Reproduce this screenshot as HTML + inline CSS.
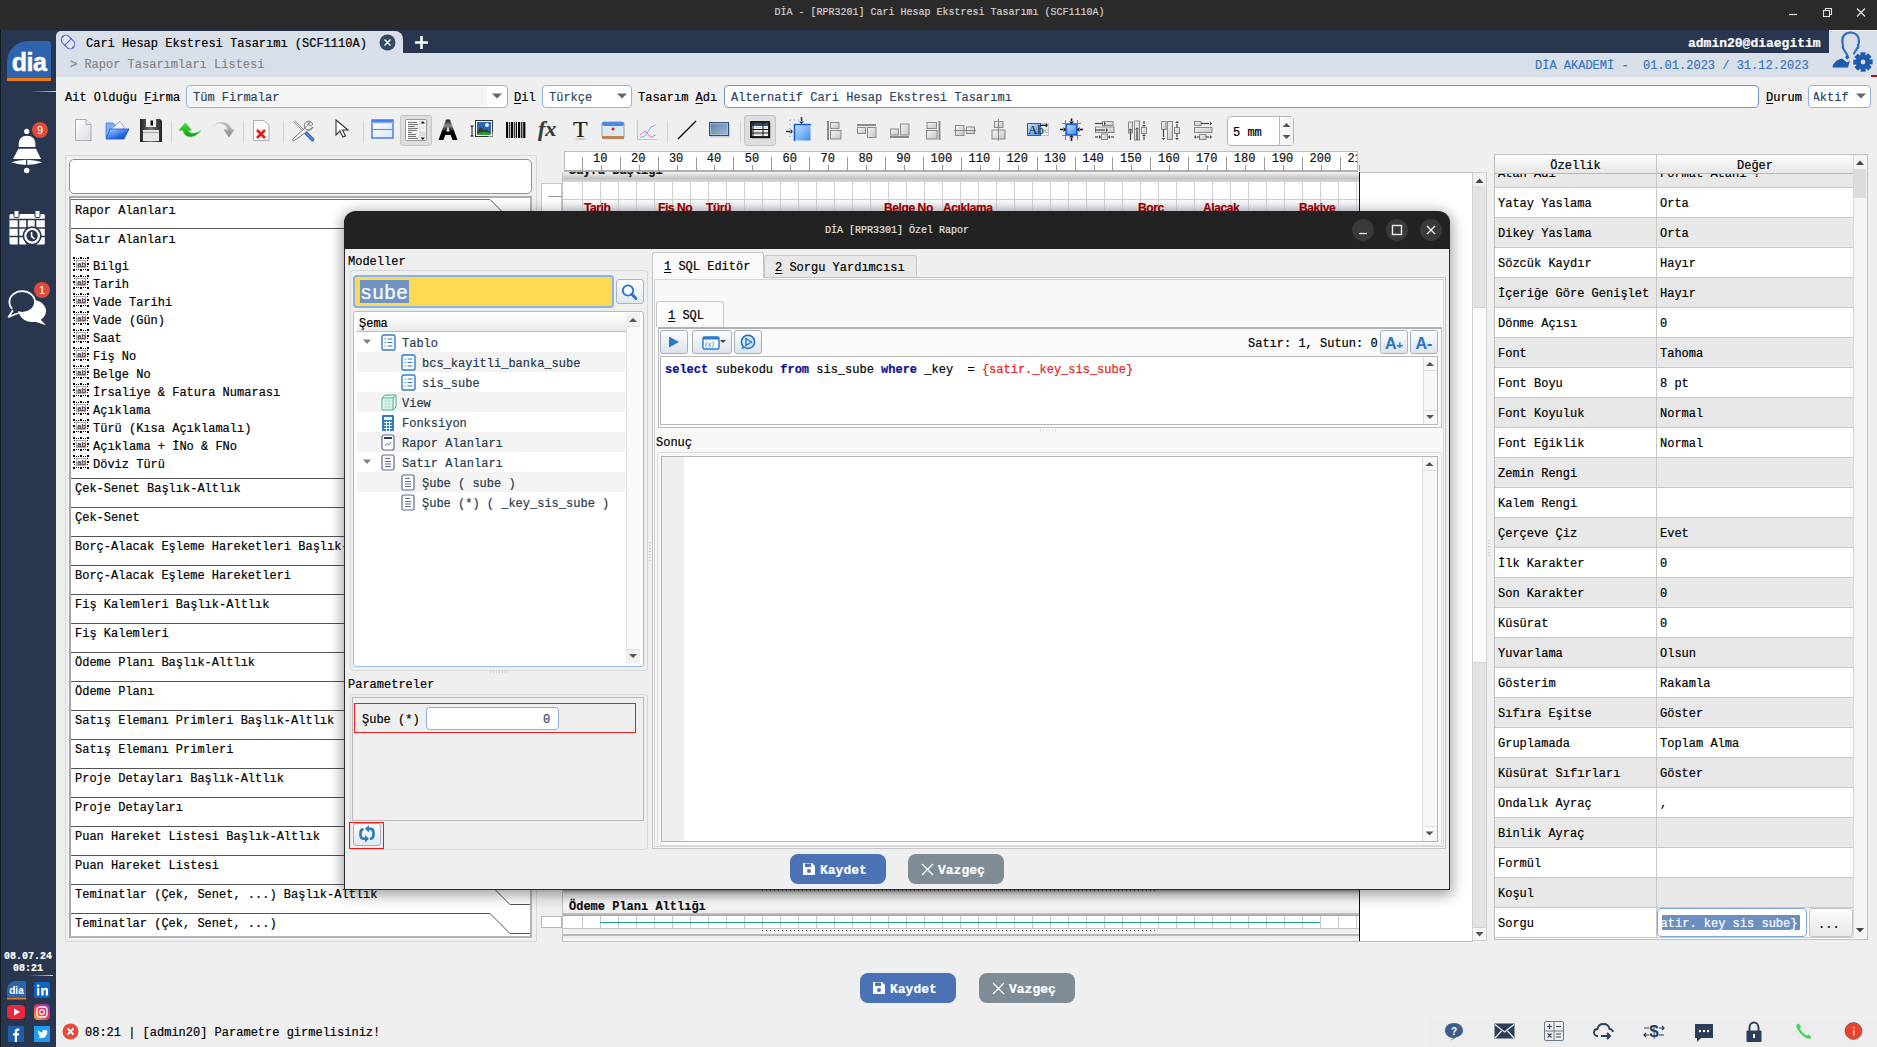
<!DOCTYPE html><html><head><meta charset="utf-8"><style>
*{margin:0;padding:0;box-sizing:border-box}
html,body{width:1877px;height:1047px;overflow:hidden;background:#efefef;font-family:"Liberation Mono",monospace;font-size:12px;color:#000}
.ab{position:absolute}
.t{position:absolute;white-space:pre;-webkit-text-stroke:0.2px currentColor}
svg{position:absolute;overflow:visible}
u{text-decoration:underline;text-underline-offset:2px}
</style></head><body>
<div class="ab" style="left:0px;top:0px;width:1877px;height:30px;background:#2b2b2b"></div>
<div class="t" style="left:1px;width:1877px;text-align:center;top:8.34px;font-size:10px;line-height:10px;color:#cfcfcf">DİA - [RPR3201] Cari Hesap Ekstresi Tasarımı (SCF1110A)</div>
<svg style="left:1786px;top:6px;" width="12" height="12" viewBox="0 0 12 12"><path d="M3 8.5H11" stroke="#ddd" stroke-width="1.2"/></svg>
<svg style="left:1820px;top:6px;" width="14" height="14" viewBox="0 0 14 14"><rect x="3.5" y="4.5" width="6" height="6" fill="none" stroke="#ddd" stroke-width="1.1"/><path d="M5.5 4.5V2.5H11.5V8.5H9.5" fill="none" stroke="#ddd" stroke-width="1.1"/></svg>
<svg style="left:1854px;top:6px;" width="14" height="14" viewBox="0 0 14 14"><path d="M3 2.5L11 10.5M11 2.5L3 10.5" stroke="#ddd" stroke-width="1.3"/></svg>
<div class="ab" style="left:0px;top:30px;width:56px;height:1017px;background:#283650"></div>
<div class="ab" style="left:0px;top:30px;width:1px;height:1017px;background:#121a24"></div>
<svg style="left:6px;top:40px;" width="46" height="42" viewBox="0 0 46 42"><path d="M1 22C1 10 11 1 22 1H42Q45 1 45 4V38H1Z" fill="#2e63ae"/><rect x="1" y="38" width="44" height="3" fill="#f07a12"/><text x="23" y="30.5" text-anchor="middle" font-family="Liberation Sans" font-weight="bold" font-size="25" letter-spacing="-0.5" fill="#fff" stroke="#fff" stroke-width=".5">dia</text></svg>
<div class="ab" style="left:30px;top:91px;width:26px;height:1px;background:linear-gradient(90deg,rgba(255,255,255,0),#cfd6e0)"></div>
<svg style="left:8px;top:120px;" width="42" height="56" viewBox="0 0 42 56"><circle cx="18.7" cy="11.4" r="2.6" fill="#fff"/><path d="M10.7 27.1V24C10.7 19 14 15.7 19 15.7C24 15.7 27.4 19 27.4 24V27.1Z" fill="#fff"/><path d="M10.4 28.8H28L33 39.1H5Z" fill="#fff"/><path d="M3 42.3Q18.7 37 34.4 42.3Q18.7 47.6 3 42.3Z" fill="#fff"/><path d="M18.7 40V45" stroke="#283650" stroke-width="1.2"/><circle cx="18.7" cy="50.5" r="2.7" fill="#fff"/></svg>
<svg style="left:31px;top:121px;" width="18" height="18" viewBox="0 0 18 18"><circle cx="9" cy="9" r="8" fill="#e04a3a"/><text x="9" y="13" text-anchor="middle" font-family="Liberation Sans" font-size="11" fill="#fff">9</text></svg>
<svg style="left:9px;top:208px;" width="38" height="40" viewBox="0 0 38 40"><rect x="0.5" y="6" width="35.3" height="30.5" rx="1.5" fill="#fff"/><rect x="5" y="2.5" width="5" height="7" rx="1" fill="#fff" stroke="#283650" stroke-width="1"/><rect x="26" y="2.5" width="5" height="7" rx="1" fill="#fff" stroke="#283650" stroke-width="1"/><path d="M0.5 11.5H36M0.5 20H36M0.5 28.5H36M9.5 11.5V37M18 11.5V37M26.5 11.5V37" stroke="#283650" stroke-width="1.6"/><circle cx="23.1" cy="27.8" r="9.6" fill="#283650"/><circle cx="23.1" cy="27.8" r="6.8" fill="none" stroke="#fff" stroke-width="2.2"/><path d="M22.6 24V28.3L25.5 31" stroke="#fff" stroke-width="1.6" fill="none"/></svg>
<svg style="left:6px;top:282px;" width="46" height="48" viewBox="0 0 46 48"><ellipse cx="26.4" cy="29" rx="13.6" ry="11" fill="#fff"/><path d="M33 36L40 43.3L27 39Z" fill="#fff"/><ellipse cx="16.2" cy="20" rx="12.8" ry="10.8" fill="#283650" stroke="#fff" stroke-width="1.8"/><path d="M7.5 27.5L2.5 35L13 30.8" fill="#283650" stroke="#fff" stroke-width="1.6" stroke-linejoin="round"/><path d="M6.5 26.5Q9 29 12 30" stroke="#283650" stroke-width="2.2" fill="none"/></svg>
<svg style="left:33px;top:281px;" width="18" height="18" viewBox="0 0 18 18"><circle cx="9" cy="9" r="8" fill="#e04a3a"/><text x="9" y="13" text-anchor="middle" font-family="Liberation Sans" font-size="11" fill="#fff">1</text></svg>
<div class="t" style="left:0px;width:56px;text-align:center;top:952.34px;font-size:10px;line-height:10px;color:#fff;font-weight:bold">08.07.24</div>
<div class="t" style="left:0px;width:56px;text-align:center;top:964.34px;font-size:10px;line-height:10px;color:#fff;font-weight:bold">08:21</div>
<div class="ab" style="left:29px;top:975px;width:24px;height:1px;background:linear-gradient(90deg,rgba(255,255,255,0),#cfd6e0)"></div>
<svg style="left:6px;top:980px;" width="21" height="20" viewBox="0 0 21 20"><path d="M1 10C1 5 5 1 10 1H19Q20 1 20 2V18H1Z" fill="#2e63ae"/><rect x="1" y="18" width="19" height="1.5" fill="#f07a12"/><text x="10.5" y="14" text-anchor="middle" font-family="Liberation Sans" font-weight="bold" font-size="10" fill="#fff">dia</text></svg>
<svg style="left:34px;top:982px;" width="16" height="16" viewBox="0 0 16 16"><rect width="16" height="16" rx="2" fill="#0a66c2"/><rect x="3" y="6" width="2.3" height="7.5" fill="#fff"/><circle cx="4.15" cy="3.8" r="1.3" fill="#fff"/><path d="M7.3 6H9.5V7C10 6.2 11 5.8 12 5.8C13.7 5.8 14 7 14 8.5V13.5H11.7V9C11.7 8.2 11.5 7.7 10.7 7.7C9.9 7.7 9.6 8.3 9.6 9V13.5H7.3Z" fill="#fff"/></svg>
<svg style="left:7px;top:1005px;" width="18" height="14" viewBox="0 0 18 14"><rect width="18" height="14" rx="4" fill="#e8283c"/><path d="M7 3.5V10.5L13 7Z" fill="#fff"/></svg>
<svg style="left:34px;top:1004px;" width="16" height="16" viewBox="0 0 16 16"><defs><linearGradient id="ig" x1="0" y1="1" x2="1" y2="0"><stop offset="0" stop-color="#fdb23a"/><stop offset=".5" stop-color="#e8325a"/><stop offset="1" stop-color="#7a3bc7"/></linearGradient></defs><rect width="16" height="16" rx="4" fill="url(#ig)"/><rect x="3" y="3" width="10" height="10" rx="3" fill="none" stroke="#fff" stroke-width="1.3"/><circle cx="8" cy="8" r="2.4" fill="none" stroke="#fff" stroke-width="1.3"/></svg>
<svg style="left:8px;top:1026px;" width="16" height="16" viewBox="0 0 16 16"><rect width="16" height="16" fill="#1b5fa8"/><path d="M9 16V9.5H11L11.3 7.2H9V5.8C9 5.1 9.2 4.7 10.2 4.7H11.4V2.6C11.2 2.6 10.5 2.5 9.7 2.5C8 2.5 6.8 3.5 6.8 5.4V7.2H5V9.5H6.8V16Z" fill="#fff"/></svg>
<svg style="left:34px;top:1026px;" width="16" height="16" viewBox="0 0 16 16"><rect width="16" height="16" fill="#1d9bf0"/><path d="M13.5 4.8C13.1 5 12.7 5.1 12.3 5.1C12.7 4.8 13 4.4 13.2 4C12.8 4.2 12.3 4.4 11.9 4.5C11.1 3.6 9.7 3.6 8.9 4.4C8.4 4.9 8.2 5.7 8.4 6.4C6.7 6.3 5.2 5.5 4.1 4.2C3.6 5.2 3.9 6.4 4.8 7C4.5 7 4.2 6.9 3.9 6.7C3.9 7.7 4.6 8.6 5.6 8.8C5.3 8.9 5 8.9 4.7 8.8C5 9.7 5.8 10.3 6.7 10.3C5.8 11 4.6 11.3 3.5 11.2C8.2 14 13.3 11 13.2 6.1C13.2 5.6 13.5 5.2 13.5 4.8Z" fill="#fff"/></svg>
<div class="ab" style="left:56px;top:30px;width:1773px;height:23px;background:#283650"></div>
<div class="ab" style="left:1829px;top:31px;width:48px;height:46px;background:#d8dfe9"></div>
<div class="ab" style="left:56px;top:31px;width:347px;height:46px;background:#d8dfe9;border-top-left-radius:5px;border-top-right-radius:8px"></div>
<div class="ab" style="left:56px;top:53px;width:1821px;height:24px;background:#d8dfe9"></div>
<svg style="left:58px;top:32px;" width="20" height="20" viewBox="0 0 20 20"><g transform="rotate(45 10 10)"><rect x="2.5" y="5.5" width="15" height="9" rx="4.2" fill="#e4e4fa" stroke="#5c5cc0" stroke-width="1.1"/><path d="M10 5V15" stroke="#5c5cc0" stroke-width="1"/><path d="M1.5 10H3.5M16.5 10H18.5" stroke="#5c5cc0" stroke-width="1.3"/></g></svg>
<div class="t" style="left:86px;top:37.80px;font-size:12px;line-height:12px;">Cari Hesap Ekstresi Tasarımı (SCF1110A)</div>
<svg style="left:379px;top:34px;" width="17" height="17" viewBox="0 0 17 17"><circle cx="8.5" cy="8.5" r="8" fill="#344a63"/><path d="M5.5 5.5L11.5 11.5M11.5 5.5L5.5 11.5" stroke="#fff" stroke-width="1.4"/></svg>
<svg style="left:413px;top:34px;" width="17" height="17" viewBox="0 0 17 17"><path d="M8.5 2V15M2 8.5H15" stroke="#fff" stroke-width="2.6"/></svg>
<div class="t" style="left:70px;top:58.80px;font-size:12px;line-height:12px;color:#858585">&gt; Rapor Tasarımları Listesi</div>
<div class="ab" style="left:1660px;top:30px;width:169px;height:23px;background:#283650;border-bottom-right-radius:4px"></div>
<div class="t" style="left:1688px;top:37.04px;font-size:13px;line-height:13px;font-weight:bold;color:#fff">admin20@diaegitim</div>
<div class="t" style="left:1535px;top:59.80px;font-size:12px;line-height:12px;color:#3a76be">DİA AKADEMİ -  01.01.2023 / 31.12.2023</div>
<svg style="left:1827px;top:28px;" width="50" height="50" viewBox="0 0 50 50"><path d="M20.5 27.5C18.5 24 16.5 21.5 15.8 19.5C16.5 18 16 16.5 15.5 15C14.5 9 17.5 4.5 23.5 4.5C29 4.5 32 8.5 32 13C32 15 31.5 16.5 31 17C31.5 18 31.5 19.5 30 20.5C29 22.5 28 24 27 25.5" fill="none" stroke="#2f6ec0" stroke-width="2.2" stroke-linecap="round"/><path d="M18 29L20.5 27L22.5 29.5L20 31.5Z" fill="#1f5aae"/><path d="M5.5 39.5C6 35 10 31.5 15 30.5L20 34.5L22.8 32.5L21 39.5Z" fill="#1f5aae"/><g transform="translate(36 34)" fill="#1f5aae"><rect x="-2.6" y="-9.7" width="5" height="4.6" transform="rotate(0)"/><rect x="-2.6" y="-9.7" width="5" height="4.6" transform="rotate(45)"/><rect x="-2.6" y="-9.7" width="5" height="4.6" transform="rotate(90)"/><rect x="-2.6" y="-9.7" width="5" height="4.6" transform="rotate(135)"/><rect x="-2.6" y="-9.7" width="5" height="4.6" transform="rotate(180)"/><rect x="-2.6" y="-9.7" width="5" height="4.6" transform="rotate(225)"/><rect x="-2.6" y="-9.7" width="5" height="4.6" transform="rotate(270)"/><rect x="-2.6" y="-9.7" width="5" height="4.6" transform="rotate(315)"/><circle r="7.2"/><circle r="2.4" fill="#d8dfe9"/></g></svg>
<div class="ab" style="left:1871px;top:75px;width:6px;height:2px;background:#a01818"></div>
<div class="t" style="left:65px;top:91.80px;font-size:12px;line-height:12px;">Ait Olduğu <u>F</u>irma</div>
<div class="ab" style="left:186px;top:85px;width:322px;height:23px;background:#fff;border:1px solid #8cb3e6;border-radius:4px"></div>
<div class="ab" style="left:188px;top:87px;width:299px;height:19px;background:#f4f4f4"></div>
<div class="t" style="left:193px;top:91.80px;font-size:12px;line-height:12px;color:#2f4660">Tüm Firmalar</div>
<svg style="left:491px;top:92px;" width="12" height="8" viewBox="0 0 12 8"><path d="M1 1.5H11L6 6.5Z" fill="#666"/></svg>
<div class="t" style="left:514px;top:91.80px;font-size:12px;line-height:12px;"><u>D</u>il</div>
<div class="ab" style="left:542px;top:85px;width:90px;height:23px;background:#fff;border:1px solid #8cb3e6;border-radius:4px"></div>
<div class="t" style="left:549px;top:91.80px;font-size:12px;line-height:12px;color:#2f4660">Türkçe</div>
<svg style="left:616px;top:92px;" width="12" height="8" viewBox="0 0 12 8"><path d="M1 1.5H11L6 6.5Z" fill="#666"/></svg>
<div class="t" style="left:638px;top:91.80px;font-size:12px;line-height:12px;">Tasarım <u>A</u>dı</div>
<div class="ab" style="left:724px;top:85px;width:1035px;height:23px;background:#fff;border:1px solid #6f96cc;border-radius:4px"></div>
<div class="t" style="left:731px;top:91.80px;font-size:12px;line-height:12px;color:#2f4660">Alternatif Cari Hesap Ekstresi Tasarımı</div>
<div class="t" style="left:1766px;top:91.80px;font-size:12px;line-height:12px;"><u>D</u>urum</div>
<div class="ab" style="left:1808px;top:85px;width:63px;height:23px;background:#fff;border:1px solid #8cb3e6;border-radius:4px"></div>
<div class="ab" style="left:1814px;top:86px;width:44px;height:21px;overflow:hidden"><div class="t" style="left:-1.4px;top:5.8px;font-size:12px;line-height:12px;color:#2f4660">Aktif</div></div>
<svg style="left:1855px;top:92px;" width="12" height="8" viewBox="0 0 12 8"><path d="M1 1.5H11L6 6.5Z" fill="#666"/></svg>
<div class="ab" style="left:400px;top:115px;width:32px;height:31px;background:#dedede;border:1px solid #c4c4c4;border-radius:3px"></div>
<div class="ab" style="left:744px;top:115px;width:32px;height:31px;background:#dedede;border:1px solid #c4c4c4;border-radius:3px"></div>
<svg style="left:73px;top:118px;" width="20" height="24" viewBox="0 0 20 24"><defs><linearGradient id="pg" x1="0" y1="0" x2="1" y2="1"><stop offset="0" stop-color="#fff"/><stop offset="1" stop-color="#d8dce4"/></linearGradient></defs><path d="M2.5 1.5H13L18 6.5V22.5H2.5Z" fill="url(#pg)" stroke="#a6acb8"/><path d="M13 1.5V6.5H18" fill="#eef" stroke="#a6acb8"/></svg>
<svg style="left:104px;top:119px;" width="26" height="22" viewBox="0 0 26 22"><defs><linearGradient id="fg" x1="0" y1="0" x2="1" y2="1"><stop offset="0" stop-color="#bcd8ff"/><stop offset=".6" stop-color="#2a6ee8"/><stop offset="1" stop-color="#0a3cc0"/></linearGradient></defs><path d="M2 4H9L10 5.5H11V19H2Z" fill="#7ab0f4" stroke="#3a78e0" stroke-width=".8"/><path d="M5 12L16 2.5L21 9L10 15Z" fill="#f4f4ff" stroke="#8a8ad0" stroke-width=".8"/><path d="M6 10H25L20 20H2Z" fill="url(#fg)" stroke="#1a50d0" stroke-width=".8"/></svg>
<svg style="left:139px;top:118px;" width="24" height="25" viewBox="0 0 24 25"><defs><linearGradient id="sg" x1="0" y1="0" x2="1" y2="0"><stop offset="0" stop-color="#222"/><stop offset=".5" stop-color="#777"/><stop offset="1" stop-color="#222"/></linearGradient></defs><path d="M1 1H21L23 3V24H1Z" fill="url(#sg)"/><rect x="7" y="1" width="10" height="8" fill="#f0f0f0"/><rect x="11.5" y="2.5" width="2.5" height="5" fill="#111"/><rect x="4" y="12" width="16" height="11" fill="#e6e6e6"/><path d="M4 14.5H20" stroke="#aaa" stroke-width="1.2"/></svg>
<div class="ab" style="left:171px;top:121px;width:1px;height:22px;background:#d0d0d0"></div>
<svg style="left:176px;top:119px;" width="28" height="22" viewBox="0 0 28 22"><defs><linearGradient id="ug" x1="0" y1="0" x2="0" y2="1"><stop offset="0" stop-color="#44e044"/><stop offset="1" stop-color="#10a010"/></linearGradient></defs><path d="M9.4 3.5L2.5 11.5H7C8 19 18 21 25.5 11C20 15 14 15.5 12.5 11.5H16Z" fill="url(#ug)"/></svg>
<svg style="left:209px;top:119px;" width="28" height="22" viewBox="0 0 28 22"><defs><linearGradient id="rg" x1="0" y1="0" x2="0" y2="1"><stop offset="0" stop-color="#c4c4c4"/><stop offset="1" stop-color="#8a8a8a"/></linearGradient></defs><path d="M1.5 10C6 3 15 2 19 10.5H14.5L20 18.5L25.5 10.5H23C19 0 7 1 1.5 10Z" fill="url(#rg)"/></svg>
<div class="ab" style="left:243px;top:121px;width:1px;height:22px;background:#d0d0d0"></div>
<svg style="left:252px;top:119px;" width="19" height="23" viewBox="0 0 19 23"><path d="M1.5 1.5H12L17 6.5V21.5H1.5Z" fill="#fafafa" stroke="#a6acb8"/><path d="M5 11L13 19M13 11L5 19" stroke="#e81818" stroke-width="2.6"/></svg>
<div class="ab" style="left:283px;top:121px;width:1px;height:22px;background:#d0d0d0"></div>
<svg style="left:290px;top:118px;" width="26" height="26" viewBox="0 0 26 26"><path d="M4 3L14.5 13.5" stroke="#8a8a8a" stroke-width="2.2"/><path d="M4 3L14.5 13.5" stroke="#f4f4f4" stroke-width="1"/><path d="M14 13L22.5 21.5" stroke="#1a5cb0" stroke-width="3.6" stroke-linecap="round"/><path d="M14 13L22.5 21.5" stroke="#5aa0e8" stroke-width="1.4" stroke-linecap="round"/><path d="M20.5 3.5A4.5 4.5 0 1 0 23 9L4.5 22.5C3.5 23.5 2 22 3 21L17.5 7.5A4.5 4.5 0 0 1 20.5 3.5L18.5 6.5L20 8L23 6Z" fill="#f8f8f8" stroke="#7a7a7a" stroke-width="1"/></svg>
<svg style="left:334px;top:119px;" width="16" height="20" viewBox="0 0 16 20"><path d="M2 1V16L6 12L9 18L11.5 17L8.5 11H14Z" fill="#fff" stroke="#333" stroke-width="1.1"/></svg>
<div class="ab" style="left:363px;top:121px;width:1px;height:22px;background:#d0d0d0"></div>
<svg style="left:371px;top:119px;" width="23" height="20" viewBox="0 0 23 20"><defs><linearGradient id="bg1" x1="0" y1="0" x2="0" y2="1"><stop offset="0" stop-color="#1a5ee8"/><stop offset="1" stop-color="#b8d4ff"/></linearGradient><linearGradient id="bg2" x1="0" y1="0" x2="1" y2="1"><stop offset="0" stop-color="#fff"/><stop offset="1" stop-color="#dfe6f8"/></linearGradient></defs><rect x="1" y="1" width="21" height="18" fill="url(#bg2)" stroke="#2b6ee0" stroke-width="1.3"/><rect x="1.5" y="1.5" width="20" height="3" fill="url(#bg1)"/><path d="M1 10.5H22" stroke="#5a8ee8" stroke-width="1.1"/></svg>
<svg style="left:405px;top:119px;" width="22" height="22" viewBox="0 0 22 22"><rect x="0.5" y="0.5" width="21" height="21" rx="1" fill="#fff" stroke="#999" stroke-width="1"/><path d="M3 3.4H12M3 5.4H13M3 7.4H10M3 9.4H13M3 11.4H12M3 13.4H7M3 15.4H11M3 17.4H11M3 19.4H13" stroke="#555" stroke-width=".9"/><rect x="14.5" y="1" width="6.5" height="20" fill="#f4f4f4"/><path d="M14.5 1V21" stroke="#ddd"/><rect x="15" y="12.5" width="5.5" height="4.5" fill="#ddd"/><path d="M15.5 4.5L17.75 2L20 4.5ZM15.5 18.5L17.75 21L20 18.5Z" fill="#111"/><path d="M16.5 7.5L19 10M19 7.5L16.5 10" stroke="#ccc" stroke-width=".6"/></svg>
<svg style="left:437px;top:118px;" width="22" height="24" viewBox="0 0 22 24"><defs><linearGradient id="ag" x1="0" y1="0" x2="0" y2="1"><stop offset="0" stop-color="#222"/><stop offset=".3" stop-color="#888"/><stop offset=".6" stop-color="#000"/></linearGradient></defs><path d="M1.5 22L9 1.5H13L20.5 22H15.5L13.8 17H8.2L6.5 22ZM9.4 13.5H12.6L11 8Z" fill="url(#ag)"/></svg>
<svg style="left:466px;top:119px;" width="28" height="20" viewBox="0 0 28 20"><path d="M4.5 7H7.5M6 7V17M4.5 17H7.5" stroke="#111" stroke-width="1"/><rect x="9.5" y="1.5" width="17" height="16" fill="#fff" stroke="#333" stroke-width="1"/><rect x="11" y="3" width="14" height="13" fill="#2a66b8"/><circle cx="21" cy="6" r="2" fill="#e8f4ff"/><path d="M11 13L15 8L18 11.5L20 10L25 14V16H11Z" fill="#3a3a3a"/><path d="M11 14.5Q17 12 25 14V16H11Z" fill="#2ca02c"/><path d="M22 17.5L26.5 13.5V17.5Z" fill="#fff" stroke="#888" stroke-width=".6"/></svg>
<svg style="left:505.5px;top:122px;" width="20" height="16" viewBox="0 0 20 16"><rect x="0" y="0" width="2.2" height="16" fill="#080808"/><rect x="3.2" y="0" width="1" height="16" fill="#080808"/><rect x="5" y="0" width="2.2" height="16" fill="#080808"/><rect x="8.2" y="0" width="1" height="16" fill="#080808"/><rect x="10" y="0" width="1" height="16" fill="#080808"/><rect x="12" y="0" width="2.2" height="16" fill="#080808"/><rect x="15.2" y="0" width="1.2" height="16" fill="#080808"/><rect x="17.2" y="0" width="2.2" height="16" fill="#080808"/></svg>
<div class="t" style="left:538px;top:117px;font-family:Liberation Serif;font-style:italic;font-weight:bold;font-size:22px;line-height:24px;color:#3a3a3a">fx</div>
<div class="ab" style="left:573px;top:138px;width:16px;height:2px;background:radial-gradient(ellipse at center,rgba(0,0,0,.35),rgba(0,0,0,0) 70%)"></div>
<div class="t" style="left:573px;top:116px;font-family:Liberation Serif;font-size:24px;line-height:26px;color:#1e1e1e">T</div>
<svg style="left:601px;top:120px;" width="24" height="20" viewBox="0 0 24 20"><rect x="1" y="2" width="22" height="16" rx="2" fill="#dde8f4" stroke="#8aa"/><rect x="1" y="2" width="22" height="4" rx="2" fill="#4a8ad8"/><rect x="1" y="16" width="22" height="3" fill="#c08050"/><circle cx="12" cy="9" r="1.5" fill="#e02020"/></svg>
<svg style="left:635px;top:118px;" width="24" height="24" viewBox="0 0 24 24"><path d="M2.5 2V21.5H22" stroke="#b8b8b8" stroke-width=".8" fill="none"/><path d="M5 17L10 13L16 19.5L20.5 17" stroke="#e070a8" stroke-width="1" fill="none"/><path d="M5 19.5L10 18L16 9L20.5 7" stroke="#7ab0f0" stroke-width="1" fill="none"/></svg>
<div class="ab" style="left:667px;top:121px;width:1px;height:22px;background:#d0d0d0"></div>
<svg style="left:676px;top:119px;" width="22" height="22" viewBox="0 0 22 22"><path d="M2 20L20 2" stroke="#111" stroke-width="1.4"/></svg>
<svg style="left:707px;top:120px;" width="26" height="20" viewBox="0 0 26 20"><defs><linearGradient id="rcg" x1="0" y1="0" x2="1" y2="1"><stop offset="0" stop-color="#5f7ea4"/><stop offset="1" stop-color="#a0bcd4"/></linearGradient></defs><rect x="3" y="3.5" width="20" height="14" fill="rgba(0,0,0,.15)"/><rect x="2.5" y="2.5" width="19" height="13" fill="url(#rcg)" stroke="#2f4e78" stroke-width="1"/><rect x="3.5" y="3.5" width="17" height="11" fill="none" stroke="#b8cce0" stroke-width=".6"/></svg>
<div class="ab" style="left:740px;top:121px;width:1px;height:22px;background:#d0d0d0"></div>
<svg style="left:748px;top:119px;" width="24" height="22" viewBox="0 0 24 22"><rect x="4" y="4" width="19" height="16" fill="rgba(0,0,0,.2)"/><rect x="3" y="3" width="18" height="15" fill="#f4f4f4" stroke="#0a0a0a" stroke-width="1.8"/><rect x="4" y="4" width="16" height="3" fill="#2e4c72"/><path d="M4 10.5H20M4 14H20" stroke="#111" stroke-width="1.2"/><path d="M15 4V18M5 4V18" stroke="#111" stroke-width="1"/><path d="M6 8.5H14M6 12H14M6 15.5H14M16 8.5H19.5M16 12H19.5" stroke="#d4d4d4" stroke-width="1"/></svg>
<svg style="left:780px;top:112px;" width="440" height="36" viewBox="0 0 440 36"><defs><linearGradient id="gb" x1="0" y1="0" x2="1" y2="1"><stop offset="0" stop-color="#f6f6f6"/><stop offset="1" stop-color="#c4c4c4"/></linearGradient><linearGradient id="gbl" x1="0" y1="0" x2="1" y2="1"><stop offset="0" stop-color="#c8e0ff"/><stop offset="1" stop-color="#3c8ef0"/></linearGradient></defs><path d="M10 8H30M10 8V28" stroke="#9090c0" stroke-width="1" stroke-dasharray="1 3"/><rect x="14.5" y="12.5" width="16" height="16" fill="url(#gbl)"/><path d="M14.5 29V12.5H31" stroke="#1a5ee0" stroke-width="1.6" fill="none"/><path d="M21.5 5L21.5 9" stroke="#333" stroke-width="1.5"/><path d="M21.5 12L19.0 9.5H24.0Z" fill="#333"/><path d="M6 19.5L10 19.5" stroke="#333" stroke-width="1.5"/><path d="M13 19.5L10.5 17.0V22.0Z" fill="#333"/><path d="M48 9L48 28" stroke="#8a8a8a" stroke-width="2"/><rect x="50.5" y="10.5" width="8.5" height="6.0" fill="url(#gb)" stroke="#8a8a8a" stroke-width="1"/><rect x="50.5" y="18.5" width="10.5" height="8.5" fill="url(#gb)" stroke="#8a8a8a" stroke-width="1"/><path d="M77 13L96 13" stroke="#8a8a8a" stroke-width="2"/><rect x="77.5" y="15.5" width="8.0" height="6.0" fill="url(#gb)" stroke="#8a8a8a" stroke-width="1"/><rect x="87.5" y="15.5" width="8.5" height="10.0" fill="url(#gb)" stroke="#8a8a8a" stroke-width="1"/><path d="M110 25L129 25" stroke="#8a8a8a" stroke-width="2"/><rect x="110.5" y="17" width="8.0" height="6" fill="url(#gb)" stroke="#8a8a8a" stroke-width="1"/><rect x="120.5" y="12" width="8.5" height="11" fill="url(#gb)" stroke="#8a8a8a" stroke-width="1"/><path d="M159.5 9L159.5 28" stroke="#8a8a8a" stroke-width="2"/><rect x="147" y="10.5" width="9.5" height="6.0" fill="url(#gb)" stroke="#8a8a8a" stroke-width="1"/><rect x="146.5" y="18.5" width="10.5" height="8.5" fill="url(#gb)" stroke="#8a8a8a" stroke-width="1"/><rect x="175.5" y="13.5" width="8.5" height="10.0" fill="url(#gb)" stroke="#8a8a8a" stroke-width="1"/><rect x="186.5" y="15" width="8.0" height="6.5" fill="url(#gb)" stroke="#8a8a8a" stroke-width="1"/><path d="M174 18.5L196 18.5" stroke="#888" stroke-width="1"/><rect x="214.5" y="9.5" width="8.5" height="6.0" fill="url(#gb)" stroke="#8a8a8a" stroke-width="1"/><rect x="212" y="18" width="13" height="9" fill="url(#gb)" stroke="#8a8a8a" stroke-width="1"/><path d="M218.5 7L218.5 29" stroke="#888" stroke-width="1"/><rect x="260.5" y="11.5" width="8" height="12" fill="#eee" stroke="#bbb" stroke-width=".8"/><rect x="247.5" y="11.5" width="13" height="12" fill="url(#gbl)" stroke="#1a5ee0" stroke-width="1"/><text x="248" y="22" font-family="Liberation Serif" font-size="13" fill="#111">Ab</text><text x="260" y="21" font-family="Liberation Serif" font-size="9" fill="#999">bc</text><path d="M260 13.299999999999997L266 13.299999999999997" stroke="#111" stroke-width="1.3"/><path d="M268 13.299999999999997L265.8 11.099999999999998V15.499999999999996Z" fill="#111"/><path d="M285.5 8V28M297.5 8V28M282 11.5H301M282 23.5H301" stroke="#7070a8" stroke-width=".9"/><rect x="286.5" y="12.5" width="10" height="10" fill="url(#gbl)" stroke="#1a5ee0" stroke-width="1.2"/><path d="M291.5 6.5L291.5 9" stroke="#111" stroke-width="1.6"/><path d="M291.5 12L289.0 9.5H294.0Z" fill="#111"/><path d="M291.5 29L291.5 26" stroke="#111" stroke-width="1.6"/><path d="M291.5 23L289.0 25.5H294.0Z" fill="#111"/><path d="M280 17.5L283 17.5" stroke="#111" stroke-width="1.6"/><path d="M286 17.5L283.5 15.0V20.0Z" fill="#111"/><path d="M303 17.5L300 17.5" stroke="#111" stroke-width="1.6"/><path d="M297 17.5L299.5 15.0V20.0Z" fill="#111"/><rect x="322.5" y="9.5" width="10.5" height="4.0" fill="url(#gb)" stroke="#8a8a8a" stroke-width="1"/><rect x="315.5" y="15" width="18.5" height="5.5" fill="url(#gb)" stroke="#8a8a8a" stroke-width="1"/><rect x="321.5" y="22" width="6.0" height="5.5" fill="url(#gb)" stroke="#8a8a8a" stroke-width="1"/><path d="M315 11.5L323 11.5" stroke="#444" stroke-width="1.2"/><path d="M326 11.5L324 9.5V13.5Z" fill="#444"/><path d="M315 18L325 18" stroke="#444" stroke-width="1.2"/><path d="M328 18L326 16V20Z" fill="#444"/><path d="M315 25L318 25" stroke="#444" stroke-width="1.2"/><path d="M321 25L319 23V27Z" fill="#444"/><path d="M334 25L331 25" stroke="#444" stroke-width="1.2"/><path d="M328 25L330 23V27Z" fill="#444"/><rect x="348.5" y="10" width="4.0" height="11" fill="url(#gb)" stroke="#8a8a8a" stroke-width="1"/><rect x="354.5" y="9" width="5.0" height="19" fill="url(#gb)" stroke="#8a8a8a" stroke-width="1"/><rect x="361.5" y="15.5" width="5.0" height="6.0" fill="url(#gb)" stroke="#8a8a8a" stroke-width="1"/><path d="M350.5 28L350.5 19" stroke="#444" stroke-width="1.2"/><path d="M350.5 16.5L348.5 18.5H352.5Z" fill="#444"/><path d="M357 28L357 18" stroke="#444" stroke-width="1.2"/><path d="M357 15.5L355 17.5H359Z" fill="#444"/><path d="M364 9L364 12" stroke="#444" stroke-width="1.2"/><path d="M364 15L362 13H366Z" fill="#444"/><path d="M364 28L364 24.5" stroke="#444" stroke-width="1.2"/><path d="M364 22L362 24H366Z" fill="#444"/><rect x="381.5" y="9.5" width="4.5" height="8.0" fill="url(#gb)" stroke="#8a8a8a" stroke-width="1"/><rect x="387.5" y="9.5" width="5.0" height="18.0" fill="url(#gb)" stroke="#8a8a8a" stroke-width="1"/><rect x="394.5" y="15.5" width="5.0" height="6.0" fill="url(#gb)" stroke="#8a8a8a" stroke-width="1"/><path d="M383.5 17.5L383.5 25" stroke="#444" stroke-width="1.2"/><path d="M383.5 28L381.5 26H385.5Z" fill="#444"/><path d="M397 12L397 15.5" stroke="#444" stroke-width="1.2"/><path d="M397 9L395 11H399Z" fill="#444"/><path d="M397 21.5L397 25" stroke="#444" stroke-width="1.2"/><path d="M397 28L395 26H399Z" fill="#444"/><rect x="414.5" y="9.5" width="6.5" height="4.0" fill="url(#gb)" stroke="#8a8a8a" stroke-width="1"/><rect x="414.5" y="15.5" width="17.5" height="5.0" fill="url(#gb)" stroke="#8a8a8a" stroke-width="1"/><rect x="419.5" y="22.5" width="6.5" height="5.0" fill="url(#gb)" stroke="#8a8a8a" stroke-width="1"/><path d="M421 11.5L429 11.5" stroke="#444" stroke-width="1.2"/><path d="M432 11.5L430 9.5V13.5Z" fill="#444"/><path d="M419.5 25L417 25" stroke="#444" stroke-width="1.2"/><path d="M414 25L416 23V27Z" fill="#444"/><path d="M426 25L429 25" stroke="#444" stroke-width="1.2"/><path d="M432 25L430 23V27Z" fill="#444"/></svg>
<div class="ab" style="left:1227px;top:116px;width:67px;height:30px;background:#fff;border:1px solid #b4b4b4;border-radius:4px"></div>
<div class="ab" style="left:1279px;top:117px;width:1px;height:28px;background:#b8b8b8"></div>
<div class="ab" style="left:1280px;top:117px;width:13px;height:28px;background:linear-gradient(90deg,#fafafa,#f0f0f0)"></div>
<div class="t" style="left:1233px;top:126.80px;font-size:12px;line-height:12px;">5 mm</div>
<svg style="left:1280px;top:122px;" width="13" height="20" viewBox="0 0 13 20"><path d="M2.5 5H10.5L6.5 1Z" fill="#555"/><path d="M2.5 13H10.5L6.5 17Z" fill="#555"/></svg>
<div class="ab" style="left:65px;top:155px;width:472px;height:787px;border:1px solid #d8d8d8;border-radius:2px"></div>
<div class="ab" style="left:69px;top:159px;width:463px;height:35px;background:#fff;border:1px solid #7098cc;border-radius:5px"></div>
<div class="ab" style="left:69px;top:196px;width:463px;height:742px;background:#fff;border-top:2px solid #acacac;border-left:2px solid #a8a8a8;border-right:2px solid #b4b4b4;border-bottom:2px solid #b4b4b4"></div>
<div class="t" style="left:75px;top:204.80px;font-size:12px;line-height:12px;">Rapor Alanları</div>
<div class="ab" style="left:71px;top:199px;width:419px;height:1px;background:#707070"></div>
<svg style="left:490px;top:199px;" width="41" height="22" viewBox="0 0 41 22"><path d="M0 0.5L20 20.5H41" fill="none" stroke="#555"/></svg>
<div class="ab" style="left:71px;top:228px;width:459px;height:1px;background:#555"></div>
<div class="t" style="left:75px;top:233.80px;font-size:12px;line-height:12px;">Satır Alanları</div>
<svg style="left:73px;top:257px;" width="16" height="14" viewBox="0 0 16 14"><g fill="#000"><rect x="0" y="0" width="2" height="2"/><rect x="7" y="0" width="2" height="2"/><rect x="14" y="0" width="2" height="2"/><rect x="0" y="6" width="2" height="2"/><rect x="14" y="6" width="2" height="2"/><rect x="0" y="12" width="2" height="2"/><rect x="7" y="12" width="2" height="2"/><rect x="14" y="12" width="2" height="2"/><rect x="3" y="1" width="1" height="1"/><rect x="3" y="12" width="1" height="1"/><rect x="5" y="1" width="1" height="1"/><rect x="5" y="12" width="1" height="1"/><rect x="10" y="1" width="1" height="1"/><rect x="10" y="12" width="1" height="1"/><rect x="12" y="1" width="1" height="1"/><rect x="12" y="12" width="1" height="1"/><rect x="1" y="3" width="1" height="1"/><rect x="14" y="3" width="1" height="1"/><rect x="1" y="9" width="1" height="1"/><rect x="14" y="9" width="1" height="1"/></g><rect x="3.5" y="3.5" width="9" height="7" fill="#fff" stroke="#999" stroke-width=".8"/><text x="4.3" y="9.6" font-family="Liberation Sans" font-size="7.5" font-weight="bold" fill="#333">ab</text></svg>
<div class="t" style="left:93px;top:260.80px;font-size:12px;line-height:12px;">Bilgi</div>
<svg style="left:73px;top:275px;" width="16" height="14" viewBox="0 0 16 14"><g fill="#000"><rect x="0" y="0" width="2" height="2"/><rect x="7" y="0" width="2" height="2"/><rect x="14" y="0" width="2" height="2"/><rect x="0" y="6" width="2" height="2"/><rect x="14" y="6" width="2" height="2"/><rect x="0" y="12" width="2" height="2"/><rect x="7" y="12" width="2" height="2"/><rect x="14" y="12" width="2" height="2"/><rect x="3" y="1" width="1" height="1"/><rect x="3" y="12" width="1" height="1"/><rect x="5" y="1" width="1" height="1"/><rect x="5" y="12" width="1" height="1"/><rect x="10" y="1" width="1" height="1"/><rect x="10" y="12" width="1" height="1"/><rect x="12" y="1" width="1" height="1"/><rect x="12" y="12" width="1" height="1"/><rect x="1" y="3" width="1" height="1"/><rect x="14" y="3" width="1" height="1"/><rect x="1" y="9" width="1" height="1"/><rect x="14" y="9" width="1" height="1"/></g><rect x="3.5" y="3.5" width="9" height="7" fill="#fff" stroke="#999" stroke-width=".8"/><text x="4.3" y="9.6" font-family="Liberation Sans" font-size="7.5" font-weight="bold" fill="#333">ab</text></svg>
<div class="t" style="left:93px;top:278.80px;font-size:12px;line-height:12px;">Tarih</div>
<svg style="left:73px;top:293px;" width="16" height="14" viewBox="0 0 16 14"><g fill="#000"><rect x="0" y="0" width="2" height="2"/><rect x="7" y="0" width="2" height="2"/><rect x="14" y="0" width="2" height="2"/><rect x="0" y="6" width="2" height="2"/><rect x="14" y="6" width="2" height="2"/><rect x="0" y="12" width="2" height="2"/><rect x="7" y="12" width="2" height="2"/><rect x="14" y="12" width="2" height="2"/><rect x="3" y="1" width="1" height="1"/><rect x="3" y="12" width="1" height="1"/><rect x="5" y="1" width="1" height="1"/><rect x="5" y="12" width="1" height="1"/><rect x="10" y="1" width="1" height="1"/><rect x="10" y="12" width="1" height="1"/><rect x="12" y="1" width="1" height="1"/><rect x="12" y="12" width="1" height="1"/><rect x="1" y="3" width="1" height="1"/><rect x="14" y="3" width="1" height="1"/><rect x="1" y="9" width="1" height="1"/><rect x="14" y="9" width="1" height="1"/></g><rect x="3.5" y="3.5" width="9" height="7" fill="#fff" stroke="#999" stroke-width=".8"/><text x="4.3" y="9.6" font-family="Liberation Sans" font-size="7.5" font-weight="bold" fill="#333">ab</text></svg>
<div class="t" style="left:93px;top:296.80px;font-size:12px;line-height:12px;">Vade Tarihi</div>
<svg style="left:73px;top:311px;" width="16" height="14" viewBox="0 0 16 14"><g fill="#000"><rect x="0" y="0" width="2" height="2"/><rect x="7" y="0" width="2" height="2"/><rect x="14" y="0" width="2" height="2"/><rect x="0" y="6" width="2" height="2"/><rect x="14" y="6" width="2" height="2"/><rect x="0" y="12" width="2" height="2"/><rect x="7" y="12" width="2" height="2"/><rect x="14" y="12" width="2" height="2"/><rect x="3" y="1" width="1" height="1"/><rect x="3" y="12" width="1" height="1"/><rect x="5" y="1" width="1" height="1"/><rect x="5" y="12" width="1" height="1"/><rect x="10" y="1" width="1" height="1"/><rect x="10" y="12" width="1" height="1"/><rect x="12" y="1" width="1" height="1"/><rect x="12" y="12" width="1" height="1"/><rect x="1" y="3" width="1" height="1"/><rect x="14" y="3" width="1" height="1"/><rect x="1" y="9" width="1" height="1"/><rect x="14" y="9" width="1" height="1"/></g><rect x="3.5" y="3.5" width="9" height="7" fill="#fff" stroke="#999" stroke-width=".8"/><text x="4.3" y="9.6" font-family="Liberation Sans" font-size="7.5" font-weight="bold" fill="#333">ab</text></svg>
<div class="t" style="left:93px;top:314.80px;font-size:12px;line-height:12px;">Vade (Gün)</div>
<svg style="left:73px;top:329px;" width="16" height="14" viewBox="0 0 16 14"><g fill="#000"><rect x="0" y="0" width="2" height="2"/><rect x="7" y="0" width="2" height="2"/><rect x="14" y="0" width="2" height="2"/><rect x="0" y="6" width="2" height="2"/><rect x="14" y="6" width="2" height="2"/><rect x="0" y="12" width="2" height="2"/><rect x="7" y="12" width="2" height="2"/><rect x="14" y="12" width="2" height="2"/><rect x="3" y="1" width="1" height="1"/><rect x="3" y="12" width="1" height="1"/><rect x="5" y="1" width="1" height="1"/><rect x="5" y="12" width="1" height="1"/><rect x="10" y="1" width="1" height="1"/><rect x="10" y="12" width="1" height="1"/><rect x="12" y="1" width="1" height="1"/><rect x="12" y="12" width="1" height="1"/><rect x="1" y="3" width="1" height="1"/><rect x="14" y="3" width="1" height="1"/><rect x="1" y="9" width="1" height="1"/><rect x="14" y="9" width="1" height="1"/></g><rect x="3.5" y="3.5" width="9" height="7" fill="#fff" stroke="#999" stroke-width=".8"/><text x="4.3" y="9.6" font-family="Liberation Sans" font-size="7.5" font-weight="bold" fill="#333">ab</text></svg>
<div class="t" style="left:93px;top:332.80px;font-size:12px;line-height:12px;">Saat</div>
<svg style="left:73px;top:347px;" width="16" height="14" viewBox="0 0 16 14"><g fill="#000"><rect x="0" y="0" width="2" height="2"/><rect x="7" y="0" width="2" height="2"/><rect x="14" y="0" width="2" height="2"/><rect x="0" y="6" width="2" height="2"/><rect x="14" y="6" width="2" height="2"/><rect x="0" y="12" width="2" height="2"/><rect x="7" y="12" width="2" height="2"/><rect x="14" y="12" width="2" height="2"/><rect x="3" y="1" width="1" height="1"/><rect x="3" y="12" width="1" height="1"/><rect x="5" y="1" width="1" height="1"/><rect x="5" y="12" width="1" height="1"/><rect x="10" y="1" width="1" height="1"/><rect x="10" y="12" width="1" height="1"/><rect x="12" y="1" width="1" height="1"/><rect x="12" y="12" width="1" height="1"/><rect x="1" y="3" width="1" height="1"/><rect x="14" y="3" width="1" height="1"/><rect x="1" y="9" width="1" height="1"/><rect x="14" y="9" width="1" height="1"/></g><rect x="3.5" y="3.5" width="9" height="7" fill="#fff" stroke="#999" stroke-width=".8"/><text x="4.3" y="9.6" font-family="Liberation Sans" font-size="7.5" font-weight="bold" fill="#333">ab</text></svg>
<div class="t" style="left:93px;top:350.80px;font-size:12px;line-height:12px;">Fiş No</div>
<svg style="left:73px;top:365px;" width="16" height="14" viewBox="0 0 16 14"><g fill="#000"><rect x="0" y="0" width="2" height="2"/><rect x="7" y="0" width="2" height="2"/><rect x="14" y="0" width="2" height="2"/><rect x="0" y="6" width="2" height="2"/><rect x="14" y="6" width="2" height="2"/><rect x="0" y="12" width="2" height="2"/><rect x="7" y="12" width="2" height="2"/><rect x="14" y="12" width="2" height="2"/><rect x="3" y="1" width="1" height="1"/><rect x="3" y="12" width="1" height="1"/><rect x="5" y="1" width="1" height="1"/><rect x="5" y="12" width="1" height="1"/><rect x="10" y="1" width="1" height="1"/><rect x="10" y="12" width="1" height="1"/><rect x="12" y="1" width="1" height="1"/><rect x="12" y="12" width="1" height="1"/><rect x="1" y="3" width="1" height="1"/><rect x="14" y="3" width="1" height="1"/><rect x="1" y="9" width="1" height="1"/><rect x="14" y="9" width="1" height="1"/></g><rect x="3.5" y="3.5" width="9" height="7" fill="#fff" stroke="#999" stroke-width=".8"/><text x="4.3" y="9.6" font-family="Liberation Sans" font-size="7.5" font-weight="bold" fill="#333">ab</text></svg>
<div class="t" style="left:93px;top:368.80px;font-size:12px;line-height:12px;">Belge No</div>
<svg style="left:73px;top:383px;" width="16" height="14" viewBox="0 0 16 14"><g fill="#000"><rect x="0" y="0" width="2" height="2"/><rect x="7" y="0" width="2" height="2"/><rect x="14" y="0" width="2" height="2"/><rect x="0" y="6" width="2" height="2"/><rect x="14" y="6" width="2" height="2"/><rect x="0" y="12" width="2" height="2"/><rect x="7" y="12" width="2" height="2"/><rect x="14" y="12" width="2" height="2"/><rect x="3" y="1" width="1" height="1"/><rect x="3" y="12" width="1" height="1"/><rect x="5" y="1" width="1" height="1"/><rect x="5" y="12" width="1" height="1"/><rect x="10" y="1" width="1" height="1"/><rect x="10" y="12" width="1" height="1"/><rect x="12" y="1" width="1" height="1"/><rect x="12" y="12" width="1" height="1"/><rect x="1" y="3" width="1" height="1"/><rect x="14" y="3" width="1" height="1"/><rect x="1" y="9" width="1" height="1"/><rect x="14" y="9" width="1" height="1"/></g><rect x="3.5" y="3.5" width="9" height="7" fill="#fff" stroke="#999" stroke-width=".8"/><text x="4.3" y="9.6" font-family="Liberation Sans" font-size="7.5" font-weight="bold" fill="#333">ab</text></svg>
<div class="t" style="left:93px;top:386.80px;font-size:12px;line-height:12px;">İrsaliye &amp; Fatura Numarası</div>
<svg style="left:73px;top:401px;" width="16" height="14" viewBox="0 0 16 14"><g fill="#000"><rect x="0" y="0" width="2" height="2"/><rect x="7" y="0" width="2" height="2"/><rect x="14" y="0" width="2" height="2"/><rect x="0" y="6" width="2" height="2"/><rect x="14" y="6" width="2" height="2"/><rect x="0" y="12" width="2" height="2"/><rect x="7" y="12" width="2" height="2"/><rect x="14" y="12" width="2" height="2"/><rect x="3" y="1" width="1" height="1"/><rect x="3" y="12" width="1" height="1"/><rect x="5" y="1" width="1" height="1"/><rect x="5" y="12" width="1" height="1"/><rect x="10" y="1" width="1" height="1"/><rect x="10" y="12" width="1" height="1"/><rect x="12" y="1" width="1" height="1"/><rect x="12" y="12" width="1" height="1"/><rect x="1" y="3" width="1" height="1"/><rect x="14" y="3" width="1" height="1"/><rect x="1" y="9" width="1" height="1"/><rect x="14" y="9" width="1" height="1"/></g><rect x="3.5" y="3.5" width="9" height="7" fill="#fff" stroke="#999" stroke-width=".8"/><text x="4.3" y="9.6" font-family="Liberation Sans" font-size="7.5" font-weight="bold" fill="#333">ab</text></svg>
<div class="t" style="left:93px;top:404.80px;font-size:12px;line-height:12px;">Açıklama</div>
<svg style="left:73px;top:419px;" width="16" height="14" viewBox="0 0 16 14"><g fill="#000"><rect x="0" y="0" width="2" height="2"/><rect x="7" y="0" width="2" height="2"/><rect x="14" y="0" width="2" height="2"/><rect x="0" y="6" width="2" height="2"/><rect x="14" y="6" width="2" height="2"/><rect x="0" y="12" width="2" height="2"/><rect x="7" y="12" width="2" height="2"/><rect x="14" y="12" width="2" height="2"/><rect x="3" y="1" width="1" height="1"/><rect x="3" y="12" width="1" height="1"/><rect x="5" y="1" width="1" height="1"/><rect x="5" y="12" width="1" height="1"/><rect x="10" y="1" width="1" height="1"/><rect x="10" y="12" width="1" height="1"/><rect x="12" y="1" width="1" height="1"/><rect x="12" y="12" width="1" height="1"/><rect x="1" y="3" width="1" height="1"/><rect x="14" y="3" width="1" height="1"/><rect x="1" y="9" width="1" height="1"/><rect x="14" y="9" width="1" height="1"/></g><rect x="3.5" y="3.5" width="9" height="7" fill="#fff" stroke="#999" stroke-width=".8"/><text x="4.3" y="9.6" font-family="Liberation Sans" font-size="7.5" font-weight="bold" fill="#333">ab</text></svg>
<div class="t" style="left:93px;top:422.80px;font-size:12px;line-height:12px;">Türü (Kısa Açıklamalı)</div>
<svg style="left:73px;top:437px;" width="16" height="14" viewBox="0 0 16 14"><g fill="#000"><rect x="0" y="0" width="2" height="2"/><rect x="7" y="0" width="2" height="2"/><rect x="14" y="0" width="2" height="2"/><rect x="0" y="6" width="2" height="2"/><rect x="14" y="6" width="2" height="2"/><rect x="0" y="12" width="2" height="2"/><rect x="7" y="12" width="2" height="2"/><rect x="14" y="12" width="2" height="2"/><rect x="3" y="1" width="1" height="1"/><rect x="3" y="12" width="1" height="1"/><rect x="5" y="1" width="1" height="1"/><rect x="5" y="12" width="1" height="1"/><rect x="10" y="1" width="1" height="1"/><rect x="10" y="12" width="1" height="1"/><rect x="12" y="1" width="1" height="1"/><rect x="12" y="12" width="1" height="1"/><rect x="1" y="3" width="1" height="1"/><rect x="14" y="3" width="1" height="1"/><rect x="1" y="9" width="1" height="1"/><rect x="14" y="9" width="1" height="1"/></g><rect x="3.5" y="3.5" width="9" height="7" fill="#fff" stroke="#999" stroke-width=".8"/><text x="4.3" y="9.6" font-family="Liberation Sans" font-size="7.5" font-weight="bold" fill="#333">ab</text></svg>
<div class="t" style="left:93px;top:440.80px;font-size:12px;line-height:12px;">Açıklama + İNo &amp; FNo</div>
<svg style="left:73px;top:455px;" width="16" height="14" viewBox="0 0 16 14"><g fill="#000"><rect x="0" y="0" width="2" height="2"/><rect x="7" y="0" width="2" height="2"/><rect x="14" y="0" width="2" height="2"/><rect x="0" y="6" width="2" height="2"/><rect x="14" y="6" width="2" height="2"/><rect x="0" y="12" width="2" height="2"/><rect x="7" y="12" width="2" height="2"/><rect x="14" y="12" width="2" height="2"/><rect x="3" y="1" width="1" height="1"/><rect x="3" y="12" width="1" height="1"/><rect x="5" y="1" width="1" height="1"/><rect x="5" y="12" width="1" height="1"/><rect x="10" y="1" width="1" height="1"/><rect x="10" y="12" width="1" height="1"/><rect x="12" y="1" width="1" height="1"/><rect x="12" y="12" width="1" height="1"/><rect x="1" y="3" width="1" height="1"/><rect x="14" y="3" width="1" height="1"/><rect x="1" y="9" width="1" height="1"/><rect x="14" y="9" width="1" height="1"/></g><rect x="3.5" y="3.5" width="9" height="7" fill="#fff" stroke="#999" stroke-width=".8"/><text x="4.3" y="9.6" font-family="Liberation Sans" font-size="7.5" font-weight="bold" fill="#333">ab</text></svg>
<div class="t" style="left:93px;top:458.80px;font-size:12px;line-height:12px;">Döviz Türü</div>
<div class="ab" style="left:71px;top:478px;width:419px;height:1px;background:#555"></div>
<svg style="left:490px;top:477px;" width="42" height="30" viewBox="0 0 42 30"><path d="M0 1.5L20 21.5H40" fill="none" stroke="#555"/></svg>
<div class="ab" style="left:510px;top:498px;width:20px;height:1px;background:#555"></div>
<div class="t" style="left:75px;top:482.80px;font-size:12px;line-height:12px;">Çek-Senet Başlık-Altlık</div>
<div class="ab" style="left:71px;top:507px;width:419px;height:1px;background:#555"></div>
<svg style="left:490px;top:506px;" width="42" height="30" viewBox="0 0 42 30"><path d="M0 1.5L20 21.5H40" fill="none" stroke="#555"/></svg>
<div class="ab" style="left:510px;top:527px;width:20px;height:1px;background:#555"></div>
<div class="t" style="left:75px;top:511.80px;font-size:12px;line-height:12px;">Çek-Senet</div>
<div class="ab" style="left:71px;top:536px;width:419px;height:1px;background:#555"></div>
<svg style="left:490px;top:535px;" width="42" height="30" viewBox="0 0 42 30"><path d="M0 1.5L20 21.5H40" fill="none" stroke="#555"/></svg>
<div class="ab" style="left:510px;top:556px;width:20px;height:1px;background:#555"></div>
<div class="t" style="left:75px;top:540.80px;font-size:12px;line-height:12px;">Borç-Alacak Eşleme Hareketleri Başlık-Altlık</div>
<div class="ab" style="left:71px;top:565px;width:419px;height:1px;background:#555"></div>
<svg style="left:490px;top:564px;" width="42" height="30" viewBox="0 0 42 30"><path d="M0 1.5L20 21.5H40" fill="none" stroke="#555"/></svg>
<div class="ab" style="left:510px;top:585px;width:20px;height:1px;background:#555"></div>
<div class="t" style="left:75px;top:569.80px;font-size:12px;line-height:12px;">Borç-Alacak Eşleme Hareketleri</div>
<div class="ab" style="left:71px;top:594px;width:419px;height:1px;background:#555"></div>
<svg style="left:490px;top:593px;" width="42" height="30" viewBox="0 0 42 30"><path d="M0 1.5L20 21.5H40" fill="none" stroke="#555"/></svg>
<div class="ab" style="left:510px;top:614px;width:20px;height:1px;background:#555"></div>
<div class="t" style="left:75px;top:598.80px;font-size:12px;line-height:12px;">Fiş Kalemleri Başlık-Altlık</div>
<div class="ab" style="left:71px;top:623px;width:419px;height:1px;background:#555"></div>
<svg style="left:490px;top:622px;" width="42" height="30" viewBox="0 0 42 30"><path d="M0 1.5L20 21.5H40" fill="none" stroke="#555"/></svg>
<div class="ab" style="left:510px;top:643px;width:20px;height:1px;background:#555"></div>
<div class="t" style="left:75px;top:627.80px;font-size:12px;line-height:12px;">Fiş Kalemleri</div>
<div class="ab" style="left:71px;top:652px;width:419px;height:1px;background:#555"></div>
<svg style="left:490px;top:651px;" width="42" height="30" viewBox="0 0 42 30"><path d="M0 1.5L20 21.5H40" fill="none" stroke="#555"/></svg>
<div class="ab" style="left:510px;top:672px;width:20px;height:1px;background:#555"></div>
<div class="t" style="left:75px;top:656.80px;font-size:12px;line-height:12px;">Ödeme Planı Başlık-Altlık</div>
<div class="ab" style="left:71px;top:681px;width:419px;height:1px;background:#555"></div>
<svg style="left:490px;top:680px;" width="42" height="30" viewBox="0 0 42 30"><path d="M0 1.5L20 21.5H40" fill="none" stroke="#555"/></svg>
<div class="ab" style="left:510px;top:701px;width:20px;height:1px;background:#555"></div>
<div class="t" style="left:75px;top:685.80px;font-size:12px;line-height:12px;">Ödeme Planı</div>
<div class="ab" style="left:71px;top:710px;width:419px;height:1px;background:#555"></div>
<svg style="left:490px;top:709px;" width="42" height="30" viewBox="0 0 42 30"><path d="M0 1.5L20 21.5H40" fill="none" stroke="#555"/></svg>
<div class="ab" style="left:510px;top:730px;width:20px;height:1px;background:#555"></div>
<div class="t" style="left:75px;top:714.80px;font-size:12px;line-height:12px;">Satış Elemanı Primleri Başlık-Altlık</div>
<div class="ab" style="left:71px;top:739px;width:419px;height:1px;background:#555"></div>
<svg style="left:490px;top:738px;" width="42" height="30" viewBox="0 0 42 30"><path d="M0 1.5L20 21.5H40" fill="none" stroke="#555"/></svg>
<div class="ab" style="left:510px;top:759px;width:20px;height:1px;background:#555"></div>
<div class="t" style="left:75px;top:743.80px;font-size:12px;line-height:12px;">Satış Elemanı Primleri</div>
<div class="ab" style="left:71px;top:768px;width:419px;height:1px;background:#555"></div>
<svg style="left:490px;top:767px;" width="42" height="30" viewBox="0 0 42 30"><path d="M0 1.5L20 21.5H40" fill="none" stroke="#555"/></svg>
<div class="ab" style="left:510px;top:788px;width:20px;height:1px;background:#555"></div>
<div class="t" style="left:75px;top:772.80px;font-size:12px;line-height:12px;">Proje Detayları Başlık-Altlık</div>
<div class="ab" style="left:71px;top:797px;width:419px;height:1px;background:#555"></div>
<svg style="left:490px;top:796px;" width="42" height="30" viewBox="0 0 42 30"><path d="M0 1.5L20 21.5H40" fill="none" stroke="#555"/></svg>
<div class="ab" style="left:510px;top:817px;width:20px;height:1px;background:#555"></div>
<div class="t" style="left:75px;top:801.80px;font-size:12px;line-height:12px;">Proje Detayları</div>
<div class="ab" style="left:71px;top:826px;width:419px;height:1px;background:#555"></div>
<svg style="left:490px;top:825px;" width="42" height="30" viewBox="0 0 42 30"><path d="M0 1.5L20 21.5H40" fill="none" stroke="#555"/></svg>
<div class="ab" style="left:510px;top:846px;width:20px;height:1px;background:#555"></div>
<div class="t" style="left:75px;top:830.80px;font-size:12px;line-height:12px;">Puan Hareket Listesi Başlık-Altlık</div>
<div class="ab" style="left:71px;top:855px;width:419px;height:1px;background:#555"></div>
<svg style="left:490px;top:854px;" width="42" height="30" viewBox="0 0 42 30"><path d="M0 1.5L20 21.5H40" fill="none" stroke="#555"/></svg>
<div class="ab" style="left:510px;top:875px;width:20px;height:1px;background:#555"></div>
<div class="t" style="left:75px;top:859.80px;font-size:12px;line-height:12px;">Puan Hareket Listesi</div>
<div class="ab" style="left:71px;top:884px;width:419px;height:1px;background:#555"></div>
<svg style="left:490px;top:883px;" width="42" height="30" viewBox="0 0 42 30"><path d="M0 1.5L20 21.5H40" fill="none" stroke="#555"/></svg>
<div class="ab" style="left:510px;top:904px;width:20px;height:1px;background:#555"></div>
<div class="t" style="left:75px;top:888.80px;font-size:12px;line-height:12px;">Teminatlar (Çek, Senet, ...) Başlık-Altlık</div>
<div class="ab" style="left:71px;top:913px;width:419px;height:1px;background:#555"></div>
<svg style="left:490px;top:912px;" width="42" height="30" viewBox="0 0 42 30"><path d="M0 1.5L20 21.5H40" fill="none" stroke="#555"/></svg>
<div class="ab" style="left:510px;top:933px;width:20px;height:1px;background:#555"></div>
<div class="t" style="left:75px;top:917.80px;font-size:12px;line-height:12px;">Teminatlar (Çek, Senet, ...)</div>
<div class="ab" style="left:564px;top:151px;width:794px;height:21px;background:#fff;border:1px solid #bdbdbd;border-bottom:2px solid #b0b0b0"></div>
<svg style="left:564px;top:151px;" width="794" height="21" viewBox="0 0 794 21"><path d="M18.5 6V20" stroke="#9a9a9a"/><path d="M37.5 14V20" stroke="#9a9a9a"/><path d="M56.5 6V20" stroke="#9a9a9a"/><path d="M75.5 14V20" stroke="#9a9a9a"/><path d="M94.5 6V20" stroke="#9a9a9a"/><path d="M113.5 14V20" stroke="#9a9a9a"/><path d="M132.5 6V20" stroke="#9a9a9a"/><path d="M150.5 14V20" stroke="#9a9a9a"/><path d="M169.5 6V20" stroke="#9a9a9a"/><path d="M188.5 14V20" stroke="#9a9a9a"/><path d="M207.5 6V20" stroke="#9a9a9a"/><path d="M226.5 14V20" stroke="#9a9a9a"/><path d="M245.5 6V20" stroke="#9a9a9a"/><path d="M264.5 14V20" stroke="#9a9a9a"/><path d="M283.5 6V20" stroke="#9a9a9a"/><path d="M302.5 14V20" stroke="#9a9a9a"/><path d="M321.5 6V20" stroke="#9a9a9a"/><path d="M340.5 14V20" stroke="#9a9a9a"/><path d="M359.5 6V20" stroke="#9a9a9a"/><path d="M378.5 14V20" stroke="#9a9a9a"/><path d="M397.5 6V20" stroke="#9a9a9a"/><path d="M416.5 14V20" stroke="#9a9a9a"/><path d="M435.5 6V20" stroke="#9a9a9a"/><path d="M454.5 14V20" stroke="#9a9a9a"/><path d="M473.5 6V20" stroke="#9a9a9a"/><path d="M492.5 14V20" stroke="#9a9a9a"/><path d="M511.5 6V20" stroke="#9a9a9a"/><path d="M530.5 14V20" stroke="#9a9a9a"/><path d="M548.5 6V20" stroke="#9a9a9a"/><path d="M567.5 14V20" stroke="#9a9a9a"/><path d="M586.5 6V20" stroke="#9a9a9a"/><path d="M605.5 14V20" stroke="#9a9a9a"/><path d="M624.5 6V20" stroke="#9a9a9a"/><path d="M643.5 14V20" stroke="#9a9a9a"/><path d="M662.5 6V20" stroke="#9a9a9a"/><path d="M681.5 14V20" stroke="#9a9a9a"/><path d="M700.5 6V20" stroke="#9a9a9a"/><path d="M719.5 14V20" stroke="#9a9a9a"/><path d="M738.5 6V20" stroke="#9a9a9a"/><path d="M757.5 14V20" stroke="#9a9a9a"/><path d="M776.5 6V20" stroke="#9a9a9a"/><path d="M795.5 14V20" stroke="#9a9a9a"/></svg>
<div class="ab" style="left:565px;top:152px;width:792px;height:18px;overflow:hidden">
<div class="t" style="left:15.3px;width:40px;text-align:center;top:0.8px;font-size:12px;line-height:12px;color:#111">10</div>
<div class="t" style="left:53.2px;width:40px;text-align:center;top:0.8px;font-size:12px;line-height:12px;color:#111">20</div>
<div class="t" style="left:91.1px;width:40px;text-align:center;top:0.8px;font-size:12px;line-height:12px;color:#111">30</div>
<div class="t" style="left:129.0px;width:40px;text-align:center;top:0.8px;font-size:12px;line-height:12px;color:#111">40</div>
<div class="t" style="left:166.9px;width:40px;text-align:center;top:0.8px;font-size:12px;line-height:12px;color:#111">50</div>
<div class="t" style="left:204.8px;width:40px;text-align:center;top:0.8px;font-size:12px;line-height:12px;color:#111">60</div>
<div class="t" style="left:242.7px;width:40px;text-align:center;top:0.8px;font-size:12px;line-height:12px;color:#111">70</div>
<div class="t" style="left:280.6px;width:40px;text-align:center;top:0.8px;font-size:12px;line-height:12px;color:#111">80</div>
<div class="t" style="left:318.5px;width:40px;text-align:center;top:0.8px;font-size:12px;line-height:12px;color:#111">90</div>
<div class="t" style="left:356.4px;width:40px;text-align:center;top:0.8px;font-size:12px;line-height:12px;color:#111">100</div>
<div class="t" style="left:394.3px;width:40px;text-align:center;top:0.8px;font-size:12px;line-height:12px;color:#111">110</div>
<div class="t" style="left:432.2px;width:40px;text-align:center;top:0.8px;font-size:12px;line-height:12px;color:#111">120</div>
<div class="t" style="left:470.1px;width:40px;text-align:center;top:0.8px;font-size:12px;line-height:12px;color:#111">130</div>
<div class="t" style="left:508.0px;width:40px;text-align:center;top:0.8px;font-size:12px;line-height:12px;color:#111">140</div>
<div class="t" style="left:545.9px;width:40px;text-align:center;top:0.8px;font-size:12px;line-height:12px;color:#111">150</div>
<div class="t" style="left:583.8px;width:40px;text-align:center;top:0.8px;font-size:12px;line-height:12px;color:#111">160</div>
<div class="t" style="left:621.7px;width:40px;text-align:center;top:0.8px;font-size:12px;line-height:12px;color:#111">170</div>
<div class="t" style="left:659.6px;width:40px;text-align:center;top:0.8px;font-size:12px;line-height:12px;color:#111">180</div>
<div class="t" style="left:697.5px;width:40px;text-align:center;top:0.8px;font-size:12px;line-height:12px;color:#111">190</div>
<div class="t" style="left:735.4px;width:40px;text-align:center;top:0.8px;font-size:12px;line-height:12px;color:#111">200</div>
<div class="t" style="left:773.3px;width:40px;text-align:center;top:0.8px;font-size:12px;line-height:12px;color:#111">210</div>
</div>
<div class="ab" style="left:1358px;top:151px;width:1px;height:21px;background:#efefef"></div>
<div class="ab" style="left:562px;top:172px;width:911px;height:770px;background:#fff;border:1px solid #c0c0c0"></div>
<div class="ab" style="left:1472px;top:172px;width:15px;height:769px;background:#f0f0f0;border:1px solid #d0d0d0"></div>
<div class="ab" style="left:1473px;top:186px;width:13px;height:121px;background:#e2e2e2"></div>
<div class="ab" style="left:1473px;top:307px;width:13px;height:356px;background:#fbfbfb;border-top:1px solid #d4d4d4;border-bottom:1px solid #d4d4d4"></div>
<div class="ab" style="left:1473px;top:663px;width:13px;height:264px;background:#e2e2e2"></div>
<svg style="left:1472px;top:172px;" width="15" height="18" viewBox="0 0 15 18"><path d="M3.5 11H11.5L7.5 6.5Z" fill="#444"/></svg>
<div class="ab" style="left:1472px;top:927px;width:15px;height:14px;background:#f6f6f6;border:1px solid #d0d0d0"></div>
<svg style="left:1472px;top:927px;" width="15" height="14" viewBox="0 0 15 14"><path d="M3.5 5H11.5L7.5 9.5Z" fill="#555"/></svg>
<div class="ab" style="left:1359px;top:172px;width:1px;height:769px;background:#111"></div>
<div class="ab" style="left:563px;top:172px;width:796px;height:11px;background:linear-gradient(#f4f4f4,#c4c4c4 60%,#e0e0e0)"></div>
<div class="ab" style="left:563px;top:172px;width:796px;height:10px;overflow:hidden"><div class="t" style="left:6px;top:-6.7px;font-size:12px;line-height:12px;font-weight:bold;color:#111">Sayfa Başlığı</div></div>
<div class="ab" style="left:563px;top:182px;width:796px;height:29px;background:#fff"></div>
<svg style="left:563px;top:182px;" width="796" height="29" viewBox="0 0 796 29"><path d="M19.5 0V29" stroke="#cfcfcf"/><path d="M37.5 0V29" stroke="#cfcfcf"/><path d="M55.5 0V29" stroke="#cfcfcf"/><path d="M73.5 0V29" stroke="#cfcfcf"/><path d="M91.5 0V29" stroke="#cfcfcf"/><path d="M109.5 0V29" stroke="#cfcfcf"/><path d="M127.5 0V29" stroke="#cfcfcf"/><path d="M145.5 0V29" stroke="#cfcfcf"/><path d="M163.5 0V29" stroke="#cfcfcf"/><path d="M181.5 0V29" stroke="#cfcfcf"/><path d="M199.5 0V29" stroke="#cfcfcf"/><path d="M217.5 0V29" stroke="#cfcfcf"/><path d="M235.5 0V29" stroke="#cfcfcf"/><path d="M253.5 0V29" stroke="#cfcfcf"/><path d="M271.5 0V29" stroke="#cfcfcf"/><path d="M289.5 0V29" stroke="#cfcfcf"/><path d="M307.5 0V29" stroke="#cfcfcf"/><path d="M325.5 0V29" stroke="#cfcfcf"/><path d="M343.5 0V29" stroke="#cfcfcf"/><path d="M361.5 0V29" stroke="#cfcfcf"/><path d="M379.5 0V29" stroke="#cfcfcf"/><path d="M397.5 0V29" stroke="#cfcfcf"/><path d="M415.5 0V29" stroke="#cfcfcf"/><path d="M433.5 0V29" stroke="#cfcfcf"/><path d="M451.5 0V29" stroke="#cfcfcf"/><path d="M469.5 0V29" stroke="#cfcfcf"/><path d="M487.5 0V29" stroke="#cfcfcf"/><path d="M505.5 0V29" stroke="#cfcfcf"/><path d="M523.5 0V29" stroke="#cfcfcf"/><path d="M541.5 0V29" stroke="#cfcfcf"/><path d="M559.5 0V29" stroke="#cfcfcf"/><path d="M577.5 0V29" stroke="#cfcfcf"/><path d="M595.5 0V29" stroke="#cfcfcf"/><path d="M613.5 0V29" stroke="#cfcfcf"/><path d="M631.5 0V29" stroke="#cfcfcf"/><path d="M649.5 0V29" stroke="#cfcfcf"/><path d="M667.5 0V29" stroke="#cfcfcf"/><path d="M685.5 0V29" stroke="#cfcfcf"/><path d="M703.5 0V29" stroke="#cfcfcf"/><path d="M721.5 0V29" stroke="#cfcfcf"/><path d="M739.5 0V29" stroke="#cfcfcf"/><path d="M757.5 0V29" stroke="#cfcfcf"/><path d="M775.5 0V29" stroke="#cfcfcf"/><path d="M793.5 0V29" stroke="#cfcfcf"/><path d="M0 17.5H796" stroke="#cfcfcf"/></svg>
<div class="ab" style="left:563px;top:200px;width:796px;height:11px;background:linear-gradient(rgba(220,220,235,.0),rgba(215,215,230,.7))"></div>
<div class="t" style="left:584px;top:201.80px;font-size:12px;line-height:12px;font-family:Liberation Sans;font-weight:bold;color:#a00000;letter-spacing:-0.4px">Tarih</div>
<div class="t" style="left:658px;top:201.80px;font-size:12px;line-height:12px;font-family:Liberation Sans;font-weight:bold;color:#a00000;letter-spacing:-0.4px">Fiş No</div>
<div class="t" style="left:706px;top:201.80px;font-size:12px;line-height:12px;font-family:Liberation Sans;font-weight:bold;color:#a00000;letter-spacing:-0.4px">Türü</div>
<div class="t" style="left:884px;top:201.80px;font-size:12px;line-height:12px;font-family:Liberation Sans;font-weight:bold;color:#a00000;letter-spacing:-0.4px">Belge No</div>
<div class="t" style="left:943px;top:201.80px;font-size:12px;line-height:12px;font-family:Liberation Sans;font-weight:bold;color:#a00000;letter-spacing:-0.4px">Açıklama</div>
<div class="t" style="left:1138px;top:201.80px;font-size:12px;line-height:12px;font-family:Liberation Sans;font-weight:bold;color:#a00000;letter-spacing:-0.4px">Borç</div>
<div class="t" style="left:1203px;top:201.80px;font-size:12px;line-height:12px;font-family:Liberation Sans;font-weight:bold;color:#a00000;letter-spacing:-0.4px">Alacak</div>
<div class="t" style="left:1299px;top:201.80px;font-size:12px;line-height:12px;font-family:Liberation Sans;font-weight:bold;color:#a00000;letter-spacing:-0.4px">Bakiye</div>
<div class="ab" style="left:541px;top:183px;width:21px;height:30px;background:#fff;border:1px solid #c8c8c8"></div>
<div class="ab" style="left:548px;top:196px;width:14px;height:1px;background:#999"></div>
<div class="ab" style="left:563px;top:886px;width:796px;height:55px;background:#fff"></div>
<div class="ab" style="left:563px;top:889px;width:796px;height:5px;background:linear-gradient(#8a8a8a,#c8c8c8 60%,#e6e6e6)"></div>
<svg style="left:563px;top:889px;" width="796" height="3" viewBox="0 0 796 3"><path d="M199 1.5H592" stroke="#333" stroke-dasharray="1 3"/></svg>
<div class="ab" style="left:563px;top:894px;width:796px;height:19px;background:linear-gradient(#e8e8e8,#fafafa 50%,#ececec)"></div>
<div class="t" style="left:569px;top:900.80px;font-size:12px;line-height:12px;font-weight:bold;color:#111">Ödeme Planı Altlığı</div>
<div class="ab" style="left:563px;top:913px;width:796px;height:3px;background:linear-gradient(#c8c8c8,#a0a0a0)"></div>
<svg style="left:563px;top:916px;" width="796" height="13" viewBox="0 0 796 13"><path d="M19.5 0V12" stroke="#c8c8c8"/><path d="M37.5 0V12" stroke="#c8c8c8"/><path d="M55.5 0V12" stroke="#c8c8c8"/><path d="M73.5 0V12" stroke="#c8c8c8"/><path d="M91.5 0V12" stroke="#c8c8c8"/><path d="M109.5 0V12" stroke="#c8c8c8"/><path d="M127.5 0V12" stroke="#c8c8c8"/><path d="M145.5 0V12" stroke="#c8c8c8"/><path d="M163.5 0V12" stroke="#c8c8c8"/><path d="M181.5 0V12" stroke="#c8c8c8"/><path d="M199.5 0V12" stroke="#c8c8c8"/><path d="M217.5 0V12" stroke="#c8c8c8"/><path d="M235.5 0V12" stroke="#c8c8c8"/><path d="M253.5 0V12" stroke="#c8c8c8"/><path d="M271.5 0V12" stroke="#c8c8c8"/><path d="M289.5 0V12" stroke="#c8c8c8"/><path d="M307.5 0V12" stroke="#c8c8c8"/><path d="M325.5 0V12" stroke="#c8c8c8"/><path d="M343.5 0V12" stroke="#c8c8c8"/><path d="M361.5 0V12" stroke="#c8c8c8"/><path d="M379.5 0V12" stroke="#c8c8c8"/><path d="M397.5 0V12" stroke="#c8c8c8"/><path d="M415.5 0V12" stroke="#c8c8c8"/><path d="M433.5 0V12" stroke="#c8c8c8"/><path d="M451.5 0V12" stroke="#c8c8c8"/><path d="M469.5 0V12" stroke="#c8c8c8"/><path d="M487.5 0V12" stroke="#c8c8c8"/><path d="M505.5 0V12" stroke="#c8c8c8"/><path d="M523.5 0V12" stroke="#c8c8c8"/><path d="M541.5 0V12" stroke="#c8c8c8"/><path d="M559.5 0V12" stroke="#c8c8c8"/><path d="M577.5 0V12" stroke="#c8c8c8"/><path d="M595.5 0V12" stroke="#c8c8c8"/><path d="M613.5 0V12" stroke="#c8c8c8"/><path d="M631.5 0V12" stroke="#c8c8c8"/><path d="M649.5 0V12" stroke="#c8c8c8"/><path d="M667.5 0V12" stroke="#c8c8c8"/><path d="M685.5 0V12" stroke="#c8c8c8"/><path d="M703.5 0V12" stroke="#c8c8c8"/><path d="M721.5 0V12" stroke="#c8c8c8"/><path d="M739.5 0V12" stroke="#c8c8c8"/><path d="M757.5 0V12" stroke="#c8c8c8"/><path d="M775.5 0V12" stroke="#c8c8c8"/><path d="M793.5 0V12" stroke="#c8c8c8"/><path d="M37 6.5H757" stroke="#1fa878" stroke-width="1.2"/><path d="M0 12.5H796" stroke="#c4c4c4"/></svg>
<div class="ab" style="left:563px;top:929px;width:796px;height:5px;background:#f0f0f0"></div>
<svg style="left:563px;top:929px;" width="796" height="3" viewBox="0 0 796 3"><path d="M199 1.5H592" stroke="#555" stroke-dasharray="1 3"/></svg>
<div class="ab" style="left:563px;top:934px;width:796px;height:2px;background:#b8b8b8"></div>
<div class="ab" style="left:563px;top:936px;width:796px;height:5px;background:linear-gradient(#e8e8e8,#fafafa)"></div>
<div class="ab" style="left:541px;top:916px;width:21px;height:12px;background:#fff;border:1px solid #b8b8b8"></div>
<div class="ab" style="left:1494px;top:154px;width:374px;height:786px;background:#fff;border:1px solid #c0c0c0"></div>
<div class="ab" style="left:1495px;top:155px;width:358px;height:19px;background:linear-gradient(#fdfdfd,#e6e6e6);border-bottom:1px solid #b8b8b8"></div>
<div class="ab" style="left:1656px;top:155px;width:1px;height:782px;background:#c8c8c8"></div>
<div class="t" style="left:1495px;width:161px;text-align:center;top:159.80px;font-size:12px;line-height:12px;">Özellik</div>
<div class="t" style="left:1657px;width:196px;text-align:center;top:159.80px;font-size:12px;line-height:12px;">Değer</div>
<div class="ab" style="left:1495px;top:174px;width:358px;height:764px;overflow:hidden">
<div class="ab" style="left:0;top:-16px;width:358px;height:30px;background:#e8e8e8;border-bottom:1px solid #c8c8c8"></div>
<div class="ab" style="left:161px;top:-16px;width:1px;height:30px;background:#c8c8c8"></div>
<div class="t" style="left:3px;top:-6.2px;font-size:12px;line-height:12px">Atan Adı</div>
<div class="t" style="left:165px;top:-6.2px;font-size:12px;line-height:12px">Format Atanı ?</div>
<div class="ab" style="left:0;top:14px;width:358px;height:30px;background:#fff;border-bottom:1px solid #c8c8c8"></div>
<div class="ab" style="left:161px;top:14px;width:1px;height:30px;background:#c8c8c8"></div>
<div class="t" style="left:3px;top:23.8px;font-size:12px;line-height:12px">Yatay Yaslama</div>
<div class="t" style="left:165px;top:23.8px;font-size:12px;line-height:12px">Orta</div>
<div class="ab" style="left:0;top:44px;width:358px;height:30px;background:#e8e8e8;border-bottom:1px solid #c8c8c8"></div>
<div class="ab" style="left:161px;top:44px;width:1px;height:30px;background:#c8c8c8"></div>
<div class="t" style="left:3px;top:53.8px;font-size:12px;line-height:12px">Dikey Yaslama</div>
<div class="t" style="left:165px;top:53.8px;font-size:12px;line-height:12px">Orta</div>
<div class="ab" style="left:0;top:74px;width:358px;height:30px;background:#fff;border-bottom:1px solid #c8c8c8"></div>
<div class="ab" style="left:161px;top:74px;width:1px;height:30px;background:#c8c8c8"></div>
<div class="t" style="left:3px;top:83.8px;font-size:12px;line-height:12px">Sözcük Kaydır</div>
<div class="t" style="left:165px;top:83.8px;font-size:12px;line-height:12px">Hayır</div>
<div class="ab" style="left:0;top:104px;width:358px;height:30px;background:#e8e8e8;border-bottom:1px solid #c8c8c8"></div>
<div class="ab" style="left:161px;top:104px;width:1px;height:30px;background:#c8c8c8"></div>
<div class="t" style="left:3px;top:113.8px;font-size:12px;line-height:12px">İçeriğe Göre Genişlet</div>
<div class="t" style="left:165px;top:113.8px;font-size:12px;line-height:12px">Hayır</div>
<div class="ab" style="left:0;top:134px;width:358px;height:30px;background:#fff;border-bottom:1px solid #c8c8c8"></div>
<div class="ab" style="left:161px;top:134px;width:1px;height:30px;background:#c8c8c8"></div>
<div class="t" style="left:3px;top:143.8px;font-size:12px;line-height:12px">Dönme Açısı</div>
<div class="t" style="left:165px;top:143.8px;font-size:12px;line-height:12px">0</div>
<div class="ab" style="left:0;top:164px;width:358px;height:30px;background:#e8e8e8;border-bottom:1px solid #c8c8c8"></div>
<div class="ab" style="left:161px;top:164px;width:1px;height:30px;background:#c8c8c8"></div>
<div class="t" style="left:3px;top:173.8px;font-size:12px;line-height:12px">Font</div>
<div class="t" style="left:165px;top:173.8px;font-size:12px;line-height:12px">Tahoma</div>
<div class="ab" style="left:0;top:194px;width:358px;height:30px;background:#fff;border-bottom:1px solid #c8c8c8"></div>
<div class="ab" style="left:161px;top:194px;width:1px;height:30px;background:#c8c8c8"></div>
<div class="t" style="left:3px;top:203.8px;font-size:12px;line-height:12px">Font Boyu</div>
<div class="t" style="left:165px;top:203.8px;font-size:12px;line-height:12px">8 pt</div>
<div class="ab" style="left:0;top:224px;width:358px;height:30px;background:#e8e8e8;border-bottom:1px solid #c8c8c8"></div>
<div class="ab" style="left:161px;top:224px;width:1px;height:30px;background:#c8c8c8"></div>
<div class="t" style="left:3px;top:233.8px;font-size:12px;line-height:12px">Font Koyuluk</div>
<div class="t" style="left:165px;top:233.8px;font-size:12px;line-height:12px">Normal</div>
<div class="ab" style="left:0;top:254px;width:358px;height:30px;background:#fff;border-bottom:1px solid #c8c8c8"></div>
<div class="ab" style="left:161px;top:254px;width:1px;height:30px;background:#c8c8c8"></div>
<div class="t" style="left:3px;top:263.8px;font-size:12px;line-height:12px">Font Eğiklik</div>
<div class="t" style="left:165px;top:263.8px;font-size:12px;line-height:12px">Normal</div>
<div class="ab" style="left:0;top:284px;width:358px;height:30px;background:#e8e8e8;border-bottom:1px solid #c8c8c8"></div>
<div class="ab" style="left:161px;top:284px;width:1px;height:30px;background:#c8c8c8"></div>
<div class="t" style="left:3px;top:293.8px;font-size:12px;line-height:12px">Zemin Rengi</div>
<div class="ab" style="left:0;top:314px;width:358px;height:30px;background:#fff;border-bottom:1px solid #c8c8c8"></div>
<div class="ab" style="left:161px;top:314px;width:1px;height:30px;background:#c8c8c8"></div>
<div class="t" style="left:3px;top:323.8px;font-size:12px;line-height:12px">Kalem Rengi</div>
<div class="ab" style="left:0;top:344px;width:358px;height:30px;background:#e8e8e8;border-bottom:1px solid #c8c8c8"></div>
<div class="ab" style="left:161px;top:344px;width:1px;height:30px;background:#c8c8c8"></div>
<div class="t" style="left:3px;top:353.8px;font-size:12px;line-height:12px">Çerçeve Çiz</div>
<div class="t" style="left:165px;top:353.8px;font-size:12px;line-height:12px">Evet</div>
<div class="ab" style="left:0;top:374px;width:358px;height:30px;background:#fff;border-bottom:1px solid #c8c8c8"></div>
<div class="ab" style="left:161px;top:374px;width:1px;height:30px;background:#c8c8c8"></div>
<div class="t" style="left:3px;top:383.8px;font-size:12px;line-height:12px">İlk Karakter</div>
<div class="t" style="left:165px;top:383.8px;font-size:12px;line-height:12px">0</div>
<div class="ab" style="left:0;top:404px;width:358px;height:30px;background:#e8e8e8;border-bottom:1px solid #c8c8c8"></div>
<div class="ab" style="left:161px;top:404px;width:1px;height:30px;background:#c8c8c8"></div>
<div class="t" style="left:3px;top:413.8px;font-size:12px;line-height:12px">Son Karakter</div>
<div class="t" style="left:165px;top:413.8px;font-size:12px;line-height:12px">0</div>
<div class="ab" style="left:0;top:434px;width:358px;height:30px;background:#fff;border-bottom:1px solid #c8c8c8"></div>
<div class="ab" style="left:161px;top:434px;width:1px;height:30px;background:#c8c8c8"></div>
<div class="t" style="left:3px;top:443.8px;font-size:12px;line-height:12px">Küsürat</div>
<div class="t" style="left:165px;top:443.8px;font-size:12px;line-height:12px">0</div>
<div class="ab" style="left:0;top:464px;width:358px;height:30px;background:#e8e8e8;border-bottom:1px solid #c8c8c8"></div>
<div class="ab" style="left:161px;top:464px;width:1px;height:30px;background:#c8c8c8"></div>
<div class="t" style="left:3px;top:473.8px;font-size:12px;line-height:12px">Yuvarlama</div>
<div class="t" style="left:165px;top:473.8px;font-size:12px;line-height:12px">Olsun</div>
<div class="ab" style="left:0;top:494px;width:358px;height:30px;background:#fff;border-bottom:1px solid #c8c8c8"></div>
<div class="ab" style="left:161px;top:494px;width:1px;height:30px;background:#c8c8c8"></div>
<div class="t" style="left:3px;top:503.8px;font-size:12px;line-height:12px">Gösterim</div>
<div class="t" style="left:165px;top:503.8px;font-size:12px;line-height:12px">Rakamla</div>
<div class="ab" style="left:0;top:524px;width:358px;height:30px;background:#e8e8e8;border-bottom:1px solid #c8c8c8"></div>
<div class="ab" style="left:161px;top:524px;width:1px;height:30px;background:#c8c8c8"></div>
<div class="t" style="left:3px;top:533.8px;font-size:12px;line-height:12px">Sıfıra Eşitse</div>
<div class="t" style="left:165px;top:533.8px;font-size:12px;line-height:12px">Göster</div>
<div class="ab" style="left:0;top:554px;width:358px;height:30px;background:#fff;border-bottom:1px solid #c8c8c8"></div>
<div class="ab" style="left:161px;top:554px;width:1px;height:30px;background:#c8c8c8"></div>
<div class="t" style="left:3px;top:563.8px;font-size:12px;line-height:12px">Gruplamada</div>
<div class="t" style="left:165px;top:563.8px;font-size:12px;line-height:12px">Toplam Alma</div>
<div class="ab" style="left:0;top:584px;width:358px;height:30px;background:#e8e8e8;border-bottom:1px solid #c8c8c8"></div>
<div class="ab" style="left:161px;top:584px;width:1px;height:30px;background:#c8c8c8"></div>
<div class="t" style="left:3px;top:593.8px;font-size:12px;line-height:12px">Küsürat Sıfırları</div>
<div class="t" style="left:165px;top:593.8px;font-size:12px;line-height:12px">Göster</div>
<div class="ab" style="left:0;top:614px;width:358px;height:30px;background:#fff;border-bottom:1px solid #c8c8c8"></div>
<div class="ab" style="left:161px;top:614px;width:1px;height:30px;background:#c8c8c8"></div>
<div class="t" style="left:3px;top:623.8px;font-size:12px;line-height:12px">Ondalık Ayraç</div>
<div class="t" style="left:165px;top:623.8px;font-size:12px;line-height:12px">,</div>
<div class="ab" style="left:0;top:644px;width:358px;height:30px;background:#e8e8e8;border-bottom:1px solid #c8c8c8"></div>
<div class="ab" style="left:161px;top:644px;width:1px;height:30px;background:#c8c8c8"></div>
<div class="t" style="left:3px;top:653.8px;font-size:12px;line-height:12px">Binlik Ayraç</div>
<div class="ab" style="left:0;top:674px;width:358px;height:30px;background:#fff;border-bottom:1px solid #c8c8c8"></div>
<div class="ab" style="left:161px;top:674px;width:1px;height:30px;background:#c8c8c8"></div>
<div class="t" style="left:3px;top:683.8px;font-size:12px;line-height:12px">Formül</div>
<div class="ab" style="left:0;top:704px;width:358px;height:30px;background:#e8e8e8;border-bottom:1px solid #c8c8c8"></div>
<div class="ab" style="left:161px;top:704px;width:1px;height:30px;background:#c8c8c8"></div>
<div class="t" style="left:3px;top:713.8px;font-size:12px;line-height:12px">Koşul</div>
<div class="ab" style="left:0;top:734px;width:358px;height:30px;background:#fff;border-bottom:1px solid #c8c8c8"></div>
<div class="ab" style="left:161px;top:734px;width:1px;height:30px;background:#c8c8c8"></div>
<div class="t" style="left:3px;top:743.8px;font-size:12px;line-height:12px">Sorgu</div>
</div>
<div class="ab" style="left:1657px;top:908px;width:150px;height:29px;background:#fff;border:1px solid #7fa6dc;border-radius:4px"></div>
<div class="ab" style="left:1662px;top:915px;width:138px;height:15px;background:#6c8fc2"></div>
<div class="ab" style="left:1662px;top:914px;width:139px;height:17px;overflow:hidden"><div class="t" style="left:-8.6px;top:3.5px;font-size:12px;line-height:12px;color:#fff">satir. key sis sube}</div></div>
<div class="ab" style="left:1809px;top:908px;width:44px;height:29px;background:linear-gradient(#fcfcfc,#e8e8e8);border:1px solid #c4c4c4;border-radius:3px"></div>
<div class="t" style="left:1818px;top:918.80px;font-size:12px;line-height:12px;">...</div>
<div class="ab" style="left:1853px;top:155px;width:14px;height:783px;background:#f4f4f4;border-left:1px solid #d8d8d8"></div>
<div class="ab" style="left:1854px;top:169px;width:12px;height:29px;background:#dcdcdc"></div>
<svg style="left:1853px;top:155px;" width="14" height="16" viewBox="0 0 14 16"><path d="M3 10H11L7 5.5Z" fill="#444"/></svg>
<svg style="left:1853px;top:922px;" width="14" height="16" viewBox="0 0 14 16"><path d="M3 6H11L7 10.5Z" fill="#444"/></svg>
<svg style="left:1488px;top:540px;" width="2" height="18" viewBox="0 0 2 18"><path d="M1 0V18" stroke="#aaa" stroke-dasharray="1 2"/></svg>
<div class="ab" style="left:860px;top:973px;width:96px;height:30px;background:#4a72b4;border-radius:8px"></div>
<svg style="left:872px;top:981px;" width="14" height="14" viewBox="0 0 14 14"><path d="M1 1H10L13 4V13H1Z" fill="#fff"/><rect x="3" y="1.5" width="6" height="3.5" fill="#4a72b4"/><circle cx="7" cy="9" r="2" fill="#4a72b4"/></svg>
<div class="t" style="left:890px;top:983.04px;font-size:13px;line-height:13px;color:#fff;font-weight:bold">Kaydet</div>
<div class="ab" style="left:979px;top:973px;width:96px;height:30px;background:#7f8c95;border-radius:8px"></div>
<svg style="left:991px;top:981px;" width="14" height="14" viewBox="0 0 14 14"><path d="M2 2L13 13M13 2L2 13" stroke="#fff" stroke-width="1.3"/></svg>
<div class="t" style="left:1009px;top:983.04px;font-size:13px;line-height:13px;color:#fff;font-weight:bold">Vazgeç</div>
<svg style="left:62px;top:1023px;" width="17" height="17" viewBox="0 0 17 17"><circle cx="8.5" cy="8.5" r="8" fill="#e54b3c"/><path d="M5.5 5.5L11.5 11.5M11.5 5.5L5.5 11.5" stroke="#fff" stroke-width="1.8"/></svg>
<div class="t" style="left:85px;top:1026.80px;font-size:12px;line-height:12px;">08:21 | [admin20] Parametre girmelisiniz!</div>
<div class="ab" style="left:1429px;top:1018px;width:448px;height:29px;background:#ededed"></div>
<svg style="left:1444px;top:1022px;" width="20" height="19" viewBox="0 0 20 19"><path d="M10 1C4.5 1 1 4.5 1 8.5C1 12.5 4.5 16 9.5 16L6 19L12 15.5C16 14.5 19 12 19 8.5C19 4.5 15.5 1 10 1Z" fill="#3d5f8c"/><text x="10" y="12.5" text-anchor="middle" font-family="Liberation Sans" font-size="10" font-weight="bold" fill="#fff">?</text></svg>
<svg style="left:1494px;top:1023px;" width="21" height="16" viewBox="0 0 21 16"><rect x=".5" y=".5" width="20" height="15" fill="#2c3e57"/><path d="M1 1.5L10.5 9L20 1.5M1 15L7.5 8M20 15L13.5 8" stroke="#ececec" stroke-width="1.2" fill="none"/></svg>
<svg style="left:1544px;top:1021px;" width="21" height="21" viewBox="0 0 21 21"><rect x=".5" y=".5" width="19" height="19" rx="1.5" fill="none" stroke="#6b7a8a"/><path d="M10 1V20M1 10H20" stroke="#6b7a8a"/><path d="M3 5.5H8M5.5 3V8M12 5.5H17M3.5 12.5L7.5 16.5M7.5 12.5L3.5 16.5M12 13H17M12 16H17" stroke="#3a4a5c" stroke-width="1.2"/></svg>
<svg style="left:1593px;top:1022px;" width="22" height="18" viewBox="0 0 22 18"><path d="M5 14C2.5 14 1 12.5 1 10.5C1 8.5 2.5 7 4.5 7C5 4 7.5 2 10.5 2C13.5 2 16 4 16.5 7C18.5 7 20 8.5 20 10" fill="none" stroke="#2c3e57" stroke-width="1.8"/><path d="M8 14H17M14 11L17 14L14 17" fill="none" stroke="#2c3e57" stroke-width="1.8"/></svg>
<svg style="left:1643px;top:1021px;" width="22" height="21" viewBox="0 0 22 21"><text x="11" y="16" text-anchor="middle" font-family="Liberation Sans" font-size="17" font-weight="bold" fill="#2c3e57">$</text><path d="M1 7H6M16 7H21M19 5L21 7L19 9M1 14H6M3 12L1 14L3 16M16 14H21" stroke="#2c3e57" stroke-width="1.2" fill="none"/></svg>
<svg style="left:1694px;top:1023px;" width="20" height="21" viewBox="0 0 20 21"><path d="M1 1H19V15H7L3 19V15H1Z" fill="#2c3e57"/><circle cx="6" cy="8" r="1.2" fill="#fff"/><circle cx="10" cy="8" r="1.2" fill="#fff"/><circle cx="14" cy="8" r="1.2" fill="#fff"/></svg>
<svg style="left:1745px;top:1021px;" width="18" height="22" viewBox="0 0 18 22"><path d="M4.5 10V6.5C4.5 3.5 6.5 1.5 9 1.5C11.5 1.5 13.5 3.5 13.5 6.5V10" fill="none" stroke="#2c3e57" stroke-width="2"/><rect x="1.5" y="9.5" width="15" height="11.5" rx="1" fill="#2c3e57"/><rect x="8" y="13" width="2" height="4" fill="#fff"/></svg>
<svg style="left:1795px;top:1022px;" width="18" height="18" viewBox="0 0 18 18"><path d="M2 2C1 3 1 5 3 8C5 11.5 8 14.5 11 16C13.5 17 15.5 17 16.5 15.5L14 12.5L11.5 13.5C9.5 12.5 6.5 9.5 5 7L6 4.5L3.5 1.5Z" fill="#4cd55e"/></svg>
<svg style="left:1844px;top:1021px;" width="19" height="20" viewBox="0 0 19 20"><circle cx="9.5" cy="10" r="8.5" fill="#e8432f" stroke="#555" stroke-width=".6"/><rect x="9" y="9" width="1.5" height="5.5" fill="#ffcfc8"/><circle cx="9.7" cy="6.7" r=".9" fill="#ffcfc8"/></svg>
<div class="ab" style="left:344px;top:211px;width:1106px;height:679px;background:#efefef;border-radius:12px 12px 0 0;box-shadow:0 3px 14px 2px rgba(0,0,0,.38);border:1px solid #2a2a2a;border-top:none"></div>
<div class="ab" style="left:344px;top:211px;width:1106px;height:38px;background:#222;border-radius:12px 12px 0 0"></div>
<div class="t" style="left:344px;width:1106px;text-align:center;top:226.34px;font-size:10px;line-height:10px;color:#e0e0e0">DİA [RPR3301] Özel Rapor</div>
<svg style="left:1352px;top:219px;" width="22" height="22" viewBox="0 0 22 22"><circle cx="11" cy="11" r="11" fill="#3a3a3a"/><path d="M7 14.5H15" stroke="#eee" stroke-width="1.3"/></svg>
<svg style="left:1386px;top:219px;" width="22" height="22" viewBox="0 0 22 22"><circle cx="11" cy="11" r="11" fill="#3a3a3a"/><rect x="6.5" y="6.5" width="9" height="9" fill="none" stroke="#eee" stroke-width="1.4"/></svg>
<svg style="left:1420px;top:219px;" width="22" height="22" viewBox="0 0 22 22"><circle cx="11" cy="11" r="11" fill="#3a3a3a"/><path d="M7 7L15 15M15 7L7 15" stroke="#eee" stroke-width="1.4"/></svg>
<div class="t" style="left:348px;top:255.80px;font-size:12px;line-height:12px;">Modeller</div>
<div class="ab" style="left:350px;top:270px;width:298px;height:401px;border:1px solid #d8d8d8;border-radius:3px"></div>
<div class="ab" style="left:353px;top:275px;width:261px;height:33px;background:#ffd952;border:2px solid #88b2ec;border-radius:4px"></div>
<div class="ab" style="left:360px;top:280px;width:49px;height:23px;background:#7093c4"></div>
<div class="t" style="left:360px;top:283.67px;font-size:20px;line-height:20px;color:#fff">sube</div>
<div class="ab" style="left:616px;top:279px;width:28px;height:25px;background:linear-gradient(#fdfdfd,#e2e8f0);border:1px solid #a8b4c4;border-radius:3px"></div>
<svg style="left:620px;top:283px;" width="20" height="18" viewBox="0 0 20 18"><circle cx="8" cy="7.5" r="5.2" fill="#f4f8ff" stroke="#2a72c8" stroke-width="1.8"/><path d="M11.8 11.2L16 15.5" stroke="#2a72c8" stroke-width="2.8" stroke-linecap="round"/></svg>
<div class="ab" style="left:353px;top:311px;width:291px;height:356px;background:#fff;border:1px solid #9cbfea;border-radius:3px"></div>
<div class="ab" style="left:357px;top:313px;width:269px;height:19px;background:linear-gradient(#fff,#eaeaea);border-bottom:1px solid #bdbdbd"></div>
<div class="t" style="left:359px;top:317.80px;font-size:12px;line-height:12px;">Şema</div>
<div class="ab" style="left:626px;top:313px;width:14px;height:352px;background:#fafafa;border-left:1px solid #e0e0e0"></div>
<div class="ab" style="left:626px;top:313px;width:14px;height:14px;background:#f0f0f0;border-bottom:1px solid #ddd"></div>
<svg style="left:626px;top:313px;" width="14" height="14" viewBox="0 0 14 14"><path d="M3 9H11L7 5Z" fill="#555"/></svg>
<div class="ab" style="left:626px;top:649px;width:14px;height:14px;background:#f0f0f0;border-top:1px solid #ddd"></div>
<svg style="left:626px;top:649px;" width="14" height="14" viewBox="0 0 14 14"><path d="M3 5H11L7 9Z" fill="#555"/></svg>
<svg style="left:362px;top:339px;" width="10" height="6" viewBox="0 0 10 6"><path d="M1 0.5H9L5 5Z" fill="#808080"/></svg>
<svg style="left:381px;top:334px;" width="16" height="18" viewBox="0 0 16 18"><rect x="1" y="1" width="13" height="15" rx="1.5" fill="#fff" stroke="#2f7cc4" stroke-width="1.4"/><path d="M3.5 5H4.8M3.5 8.5H4.8M3.5 12H4.8M6.5 5H11.5M6.5 8.5H11.5M6.5 12H11.5" stroke="#2f7cc4" stroke-width="1.2"/></svg>
<div class="t" style="left:402px;top:337.80px;font-size:12px;line-height:12px;color:#2a3a4a">Tablo</div>
<div class="ab" style="left:357px;top:352px;width:268px;height:20px;background:#f3f3f3"></div>
<svg style="left:401px;top:354px;" width="16" height="18" viewBox="0 0 16 18"><rect x="1" y="1" width="13" height="15" rx="1.5" fill="#fff" stroke="#2f7cc4" stroke-width="1.4"/><path d="M3.5 5H4.8M3.5 8.5H4.8M3.5 12H4.8M6.5 5H11.5M6.5 8.5H11.5M6.5 12H11.5" stroke="#2f7cc4" stroke-width="1.2"/></svg>
<div class="t" style="left:422px;top:357.80px;font-size:12px;line-height:12px;color:#2a3a4a">bcs_kayitli_banka_sube</div>
<svg style="left:401px;top:374px;" width="16" height="18" viewBox="0 0 16 18"><rect x="1" y="1" width="13" height="15" rx="1.5" fill="#fff" stroke="#2f7cc4" stroke-width="1.4"/><path d="M3.5 5H4.8M3.5 8.5H4.8M3.5 12H4.8M6.5 5H11.5M6.5 8.5H11.5M6.5 12H11.5" stroke="#2f7cc4" stroke-width="1.2"/></svg>
<div class="t" style="left:422px;top:377.80px;font-size:12px;line-height:12px;color:#2a3a4a">sis_sube</div>
<div class="ab" style="left:357px;top:392px;width:268px;height:20px;background:#f3f3f3"></div>
<svg style="left:381px;top:394px;" width="16" height="18" viewBox="0 0 16 18"><path d="M1 4L4 1H15V13L12 16H1Z" fill="#e4f4ee" stroke="#4ab48c"/><path d="M1 4H12V16M12 4L15 1" fill="none" stroke="#4ab48c"/><path d="M3 7H11M3 10H11M3 13H11M5 5V16M8 5V16" stroke="#9cd8c0" stroke-width=".6"/></svg>
<div class="t" style="left:402px;top:397.80px;font-size:12px;line-height:12px;color:#2a3a4a">View</div>
<svg style="left:381px;top:414px;" width="16" height="18" viewBox="0 0 16 18"><rect x="1" y="1" width="12" height="16" rx="1" fill="#2f7cc4"/><rect x="3" y="3" width="8" height="3" fill="#fff"/><path d="M3 8.5H11M3 11.5H11M3 14.5H11M5.5 7V17M8.5 7V17" stroke="#fff" stroke-width=".9"/></svg>
<div class="t" style="left:402px;top:417.80px;font-size:12px;line-height:12px;color:#2a3a4a">Fonksiyon</div>
<div class="ab" style="left:357px;top:432px;width:268px;height:20px;background:#f3f3f3"></div>
<svg style="left:381px;top:434px;" width="16" height="18" viewBox="0 0 16 18"><rect x="1" y="1" width="12" height="15" rx="2" fill="#fff" stroke="#5a6a90" stroke-width="1.2"/><rect x="3" y="3" width="8" height="2" fill="#2a3a70"/><path d="M4 12L6 9.5L8 11L10 8" stroke="#5a8ad0" fill="none"/></svg>
<div class="t" style="left:402px;top:437.80px;font-size:12px;line-height:12px;color:#2a3a4a">Rapor Alanları</div>
<svg style="left:362px;top:459px;" width="10" height="6" viewBox="0 0 10 6"><path d="M1 0.5H9L5 5Z" fill="#808080"/></svg>
<svg style="left:381px;top:454px;" width="16" height="18" viewBox="0 0 16 18"><rect x="1" y="1" width="12" height="15" rx="1.5" fill="#fff" stroke="#5a6a90" stroke-width="1.2"/><path d="M4 4.5H9M4 7.5H10M4 10H10M4 12.5H10" stroke="#5a6a90" stroke-width="1"/></svg>
<div class="t" style="left:402px;top:457.80px;font-size:12px;line-height:12px;color:#2a3a4a">Satır Alanları</div>
<div class="ab" style="left:357px;top:472px;width:268px;height:20px;background:#f3f3f3"></div>
<svg style="left:401px;top:474px;" width="16" height="18" viewBox="0 0 16 18"><rect x="1" y="1" width="12" height="15" rx="1.5" fill="#fff" stroke="#5a6a90" stroke-width="1.2"/><path d="M4 4.5H9M4 7.5H10M4 10H10M4 12.5H10" stroke="#5a6a90" stroke-width="1"/></svg>
<div class="t" style="left:422px;top:477.80px;font-size:12px;line-height:12px;color:#2a3a4a">Şube ( sube )</div>
<svg style="left:401px;top:494px;" width="16" height="18" viewBox="0 0 16 18"><rect x="1" y="1" width="12" height="15" rx="1.5" fill="#fff" stroke="#5a6a90" stroke-width="1.2"/><path d="M4 4.5H9M4 7.5H10M4 10H10M4 12.5H10" stroke="#5a6a90" stroke-width="1"/></svg>
<div class="t" style="left:422px;top:497.80px;font-size:12px;line-height:12px;color:#2a3a4a">Şube (*) ( _key_sis_sube )</div>
<svg style="left:490px;top:671px;" width="18" height="2" viewBox="0 0 18 2"><path d="M0 1H18" stroke="#aaa" stroke-dasharray="1 2"/></svg>
<div class="t" style="left:348px;top:678.80px;font-size:12px;line-height:12px;">Parametreler</div>
<div class="ab" style="left:350px;top:694px;width:298px;height:156px;border:1px solid #d8d8d8;border-radius:3px"></div>
<div class="ab" style="left:352px;top:697px;width:292px;height:124px;border:1px solid #b8b8b8"></div>
<div class="ab" style="left:354px;top:703px;width:282px;height:30px;border:1px solid #ee1c1c"></div>
<div class="t" style="left:362px;top:713.80px;font-size:12px;line-height:12px;">Şube (*)</div>
<div class="ab" style="left:426px;top:707px;width:133px;height:23px;background:#fff;border:1px solid #8cb0e0;border-radius:4px"></div>
<div class="t" style="left:543px;top:713.80px;font-size:12px;line-height:12px;color:#2f4660">0</div>
<div class="ab" style="left:349px;top:822px;width:35px;height:27px;border:1px solid #f41414"></div>
<div class="ab" style="left:353px;top:823px;width:28px;height:23px;background:linear-gradient(#fdfdfd,#e2e8f0);border:1px solid #a8b0bc;border-radius:3px"></div>
<svg style="left:353px;top:823px;" width="28" height="23" viewBox="0 0 28 23"><g fill="none" stroke="#2a7bbd" stroke-width="2.6"><path d="M10.5 6.2Q7.5 6.2 7.5 10V12Q7.5 15.8 11 15.8H13"/><path d="M17 15.8Q20.5 15.8 20.5 12V9.5Q20.5 5.7 17 5.7H15"/></g><g fill="#2a7bbd"><path d="M12 12L16 15.8L12 19.5Z"/><path d="M16 2L12 5.7L16 9.5Z"/></g></svg>
<div class="ab" style="left:652px;top:277px;width:794px;height:572px;background:#f8f8f8;border:1px solid #c4c4c4"></div>
<div class="ab" style="left:654px;top:279px;width:790px;height:568px;border:1px solid #d4d4d4"></div>
<div class="ab" style="left:652px;top:252px;width:112px;height:26px;background:#f9f9f9;border:1px solid #c4c4c4;border-bottom:none;border-radius:3px 3px 0 0"></div>
<div class="t" style="left:664px;top:260.80px;font-size:12px;line-height:12px;"><u>1</u> SQL Editör</div>
<div class="ab" style="left:764px;top:255px;width:153px;height:22px;background:#e8e8e8;border:1px solid #c8c8c8;border-bottom:none;border-radius:3px 3px 0 0"></div>
<div class="t" style="left:775px;top:261.80px;font-size:12px;line-height:12px;"><u>2</u> Sorgu Yardımcısı</div>
<div class="ab" style="left:656px;top:301px;width:68px;height:26px;background:#fafafa;border:1px solid #c8c8c8;border-bottom:none;border-radius:3px 3px 0 0"></div>
<div class="t" style="left:668px;top:309.80px;font-size:12px;line-height:12px;"><u>1</u> SQL</div>
<div class="ab" style="left:658px;top:327px;width:784px;height:101px;background:#fafafa;border:1px solid #bcbcbc;border-top:2px solid #b0b0b0"></div>
<div class="ab" style="left:660px;top:330px;width:28px;height:24px;background:linear-gradient(#fbfcfe,#dde4ec);border:1px solid #a8b0bc;border-radius:3px"></div>
<svg style="left:660px;top:330px;" width="28" height="24" viewBox="0 0 28 24"><path d="M9 6.5V17.5L19 12Z" fill="#2a78c8"/></svg>
<div class="ab" style="left:692px;top:330px;width:40px;height:24px;background:linear-gradient(#fbfcfe,#dde4ec);border:1px solid #a8b0bc;border-radius:3px"></div>
<svg style="left:692px;top:330px;" width="40" height="24" viewBox="0 0 40 24"><rect x="11" y="7" width="16" height="12" rx="1.5" fill="#fff" stroke="#2a78c8" stroke-width="1.4"/><rect x="11" y="7" width="16" height="2.5" fill="#2a78c8"/><text x="13" y="17" font-family="Liberation Serif" font-style="italic" font-size="8" fill="#2a78c8">(x)</text><path d="M28 10H34L31 13Z" fill="#444"/></svg>
<div class="ab" style="left:734px;top:330px;width:28px;height:24px;background:linear-gradient(#fbfcfe,#dde4ec);border:1px solid #a8b0bc;border-radius:3px"></div>
<svg style="left:734px;top:330px;" width="28" height="24" viewBox="0 0 28 24"><circle cx="14" cy="11.8" r="6.6" fill="#d4e6fa" stroke="#1f6fc0" stroke-width="1.5"/><path d="M8.5 16.5L7 19.5L10.5 18" fill="#2a78c8"/><path d="M12 8.5V15.5L17.5 12Z" fill="none" stroke="#2a78c8" stroke-width="1.4"/></svg>
<div class="t" style="left:1248px;top:337.80px;font-size:12px;line-height:12px;">Satır: 1, Sutun: 0</div>
<div class="ab" style="left:1380px;top:330px;width:28px;height:24px;background:linear-gradient(#fbfcfe,#dde4ec);border:1px solid #a8b0bc;border-radius:3px"></div>
<div class="ab" style="left:1410px;top:330px;width:28px;height:24px;background:linear-gradient(#fbfcfe,#dde4ec);border:1px solid #a8b0bc;border-radius:3px"></div>
<div class="t" style="left:1380px;width:28px;text-align:center;top:335.74px;font-size:16px;line-height:16px;color:#2a78c8;font-weight:bold;font-family:Liberation Sans">A<span style="font-size:11px">+</span></div>
<div class="t" style="left:1410px;width:28px;text-align:center;top:335.74px;font-size:16px;line-height:16px;color:#2a78c8;font-weight:bold;font-family:Liberation Sans">A-</div>
<div class="ab" style="left:660px;top:356px;width:778px;height:69px;background:#fff;border:1px solid #b8b8b8"></div>
<div class="ab" style="left:1423px;top:357px;width:14px;height:67px;background:#f8f8f8;border-left:1px solid #ddd"></div>
<div class="ab" style="left:1423px;top:357px;width:14px;height:14px;border-bottom:1px solid #ddd"></div>
<div class="ab" style="left:1423px;top:410px;width:14px;height:14px;border-top:1px solid #ddd"></div>
<svg style="left:1423px;top:357px;" width="14" height="14" viewBox="0 0 14 14"><path d="M3 9H11L7 5Z" fill="#555"/></svg>
<svg style="left:1423px;top:410px;" width="14" height="14" viewBox="0 0 14 14"><path d="M3 5H11L7 9Z" fill="#555"/></svg>
<div class="t" style="left:665px;top:363.80px;font-size:12px;line-height:12px;"><b style="color:#101090">select</b> subekodu <b style="color:#101090">from</b> sis_sube <b style="color:#101090">where</b> _key  = <span style="color:#e82020">{satir._key_sis_sube}</span></div>
<svg style="left:1040px;top:429px;" width="18" height="2" viewBox="0 0 18 2"><path d="M0 1H18" stroke="#bbb" stroke-dasharray="1 2"/></svg>
<div class="t" style="left:656px;top:436.80px;font-size:12px;line-height:12px;">Sonuç</div>
<svg style="left:649px;top:542px;" width="2" height="20" viewBox="0 0 2 20"><path d="M1 0V20" stroke="#aaa" stroke-dasharray="1 2"/></svg>
<div class="ab" style="left:657px;top:452px;width:785px;height:394px;border:1px solid #dcdcdc;border-radius:3px"></div>
<div class="ab" style="left:661px;top:456px;width:777px;height:386px;background:#fff;border:1px solid #b4b4b4"></div>
<div class="ab" style="left:662px;top:457px;width:22px;height:384px;background:#efefef"></div>
<div class="ab" style="left:1422px;top:457px;width:15px;height:384px;background:#f8f8f8;border-left:1px solid #ddd"></div>
<div class="ab" style="left:1422px;top:457px;width:15px;height:14px;border-bottom:1px solid #ddd"></div>
<svg style="left:1422px;top:457px;" width="15" height="14" viewBox="0 0 15 14"><path d="M3.5 9H11.5L7.5 5Z" fill="#555"/></svg>
<div class="ab" style="left:1422px;top:826px;width:15px;height:15px;background:#f8f8f8;border-top:1px solid #ddd;border-left:1px solid #ddd"></div>
<svg style="left:1422px;top:826px;" width="15" height="14" viewBox="0 0 15 14"><path d="M3.5 5.5H11.5L7.5 9.5Z" fill="#555"/></svg>
<div class="ab" style="left:790px;top:854px;width:96px;height:30px;background:#4a72b4;border-radius:8px"></div>
<svg style="left:802px;top:862px;" width="14" height="14" viewBox="0 0 14 14"><path d="M1 1H10L13 4V13H1Z" fill="#fff"/><rect x="3" y="1.5" width="6" height="3.5" fill="#4a72b4"/><circle cx="7" cy="9" r="2" fill="#4a72b4"/></svg>
<div class="t" style="left:820px;top:864.04px;font-size:13px;line-height:13px;color:#fff;font-weight:bold">Kaydet</div>
<div class="ab" style="left:908px;top:854px;width:96px;height:30px;background:#7f8c95;border-radius:8px"></div>
<svg style="left:920px;top:862px;" width="14" height="14" viewBox="0 0 14 14"><path d="M2 2L13 13M13 2L2 13" stroke="#fff" stroke-width="1.3"/></svg>
<div class="t" style="left:938px;top:864.04px;font-size:13px;line-height:13px;color:#fff;font-weight:bold">Vazgeç</div>
</body></html>
